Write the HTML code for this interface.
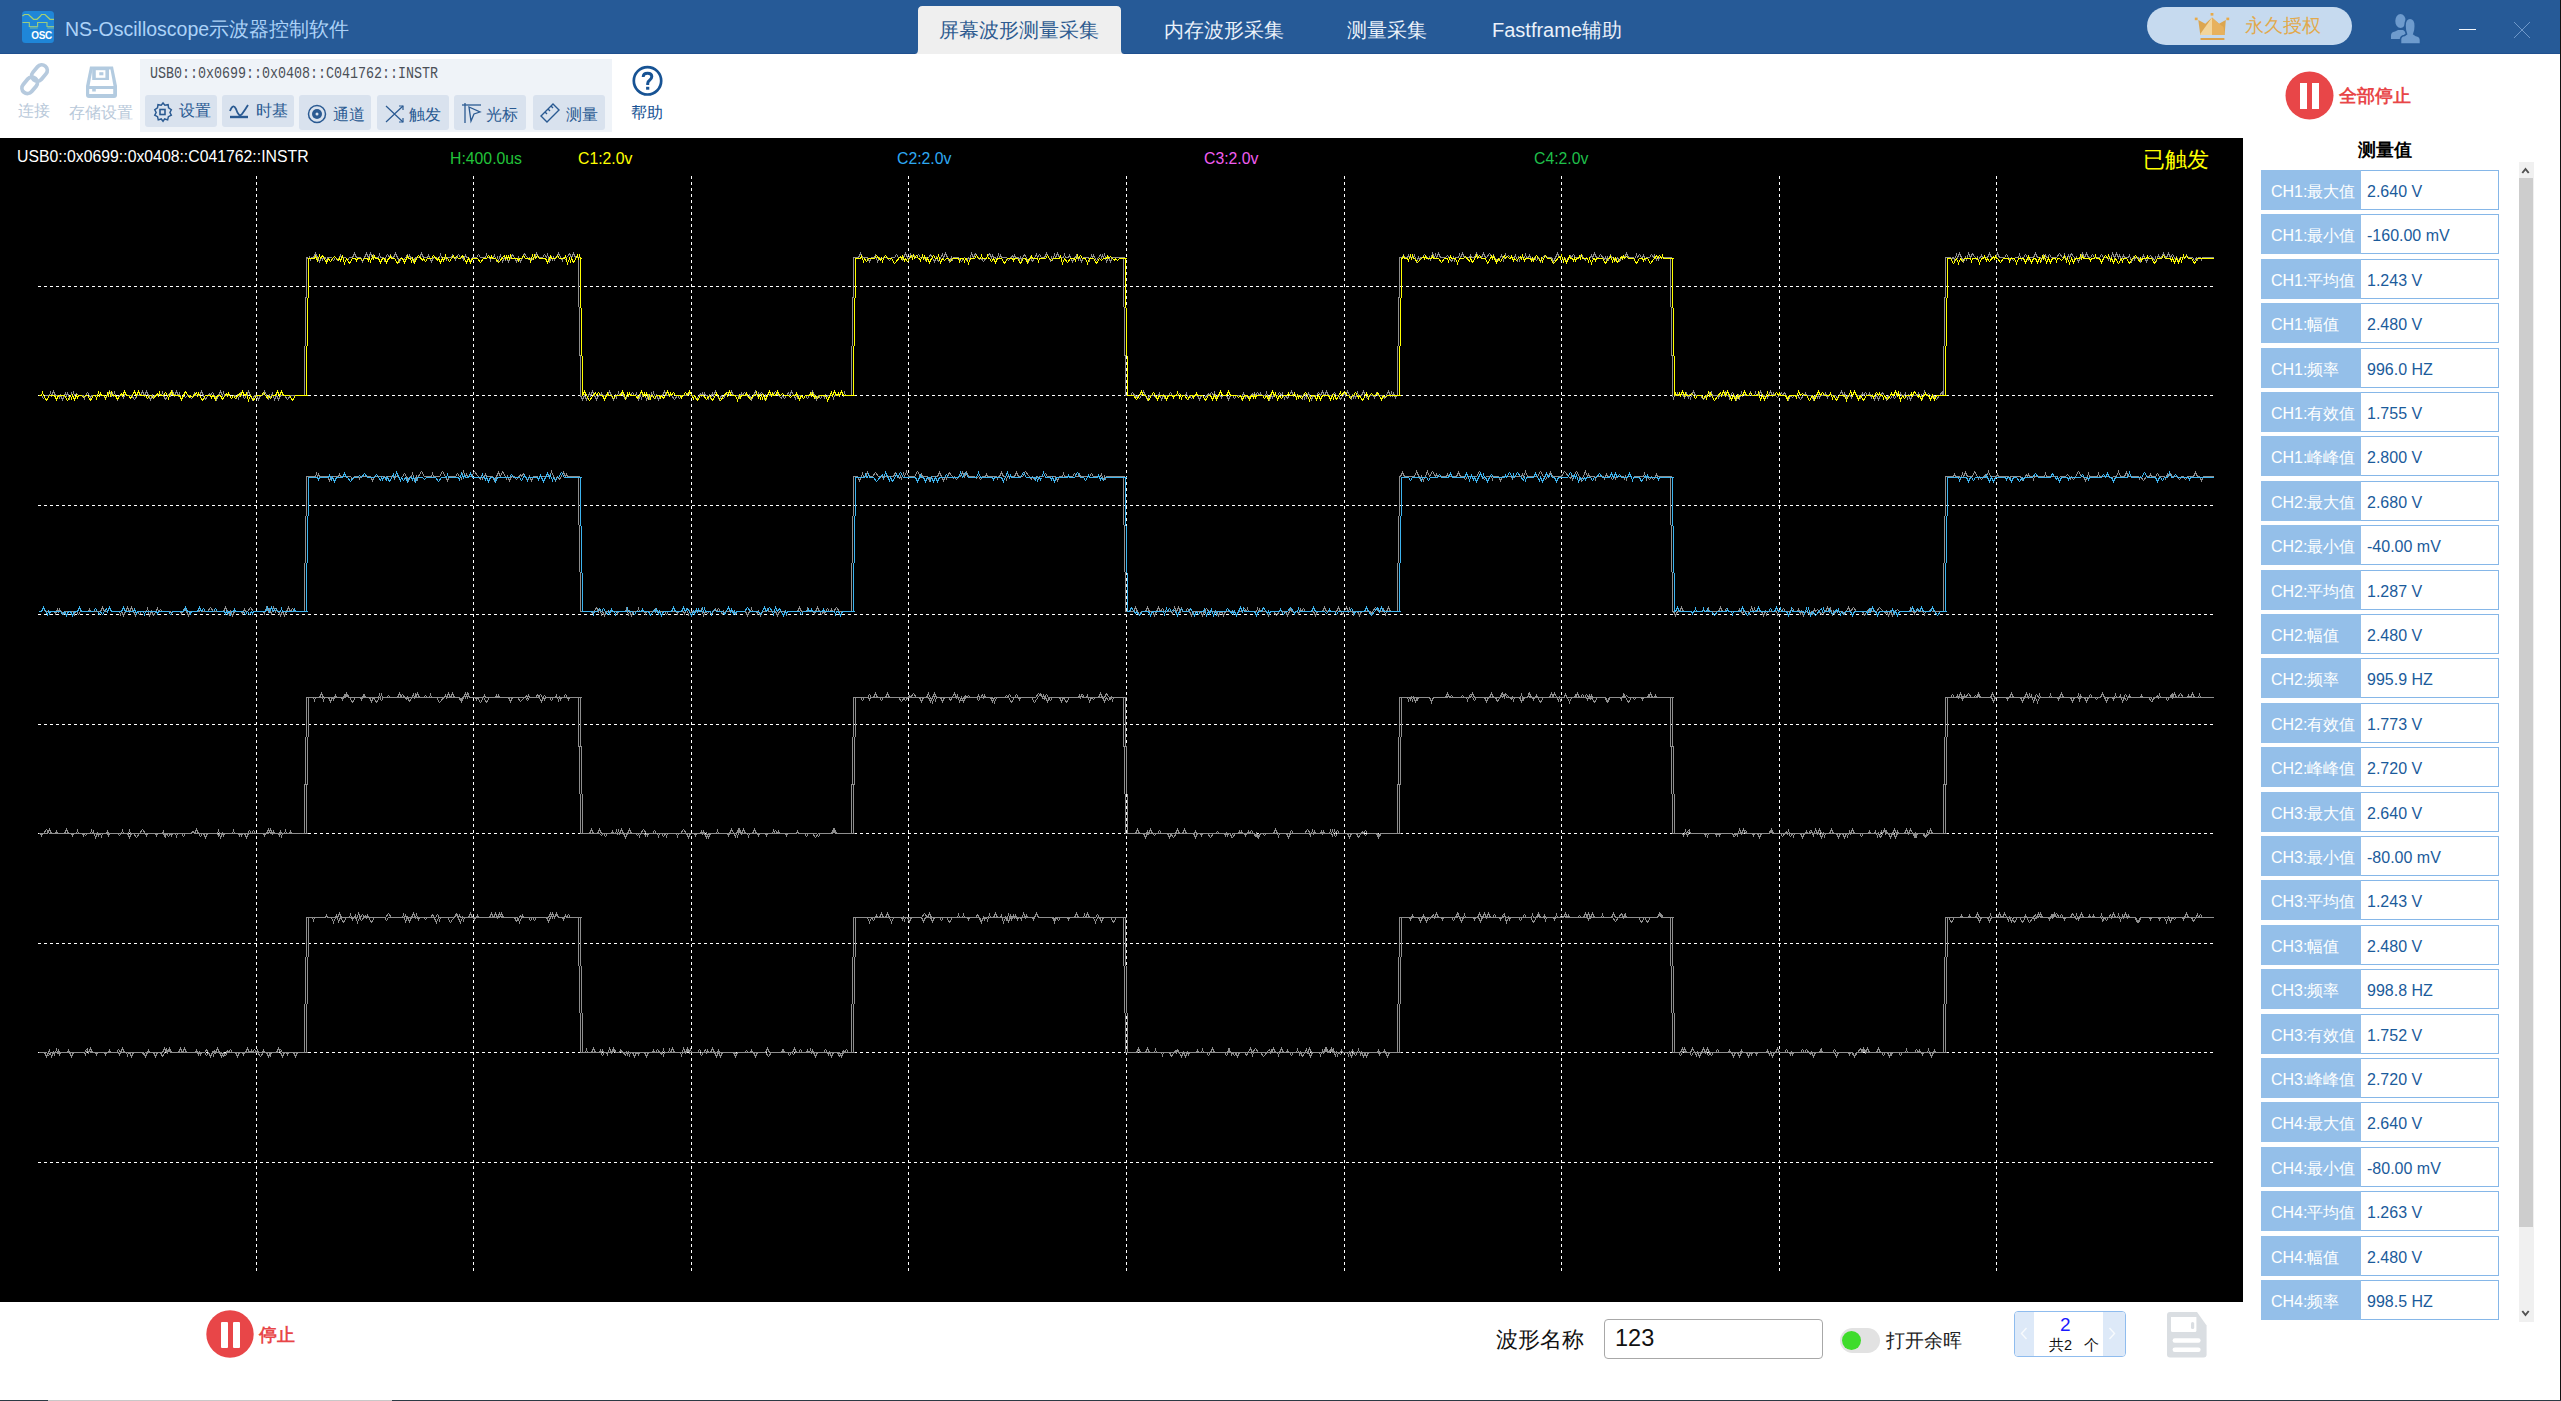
<!DOCTYPE html>
<html><head><meta charset="utf-8"><title>NS-Oscilloscope</title>
<style>
*{margin:0;padding:0;box-sizing:border-box}
html,body{width:2561px;height:1401px;overflow:hidden;background:#fff;font-family:"Liberation Sans",sans-serif}
.abs{position:absolute}
#title{position:absolute;left:0;top:0;width:2561px;height:54px;background:#265a97;border-bottom:1px solid #1f508f}
#apptitle{position:absolute;left:65px;top:15px;font-size:19.5px;color:#acd2f8;white-space:nowrap;line-height:28px}
.tab{position:absolute;top:17px;font-size:20px;line-height:26px;color:#eaf1fa;white-space:nowrap}
#lic{position:absolute;left:2147px;top:7px;width:205px;height:38px;background:#c6daef;border-radius:19px}
#lic span{position:absolute;left:98px;top:7px;font-size:19px;line-height:24px;color:#e2a94c;white-space:nowrap}
#toolbar{position:absolute;left:0;top:54px;width:2561px;height:84px;background:#fff}
#tpanel{position:absolute;left:140px;top:59px;width:472px;height:73px;background:#eff3f8}
#usbt{position:absolute;left:150px;top:64px;font-family:"Liberation Mono",monospace;font-size:17px;line-height:20px;color:#4a4f57;white-space:nowrap;transform:scaleX(0.784);transform-origin:0 0}
.btn{position:absolute;top:95px;height:32px;width:72px;background:#d9e2ee;border-radius:3px}
.btn span{position:absolute;left:34px;top:5px;font-size:16px;line-height:22px;color:#2a5a92;white-space:nowrap}
.btn svg{position:absolute;left:7px;top:6px}
.tool{position:absolute;font-size:17px;line-height:20px;white-space:nowrap}
#scope{position:absolute;left:0;top:138px;width:2243px;height:1164px;background:#000;overflow:hidden}
.sl{position:absolute;top:11px;font-size:15.8px;line-height:20px;white-space:nowrap}
#panel{position:absolute;left:2243px;top:138px;width:317px;height:1262px;background:#fff}
#ptitle{position:absolute;left:2358px;top:138px;font-size:17.5px;font-weight:bold;line-height:24px;color:#000;white-space:nowrap}
.mrow{position:absolute;left:2261px;width:238px}
.ml{position:absolute;left:0;top:0;width:100px;height:100%;background:#94bfe9;color:#fff;font-size:16px;line-height:43px;padding-left:10px;white-space:nowrap}
.mv{position:absolute;left:100px;top:0;width:138px;height:100%;border:1px solid #86b7e8;border-left:none;background:#fff;color:#1b5b9b;font-size:16px;line-height:42px;padding-left:6px;white-space:nowrap}
#sbar{position:absolute;left:2519px;top:162px;width:15px;height:1160px;background:#f0f0f0}
#sthumb{position:absolute;left:2519px;top:178px;width:14px;height:1049px;background:#cdcdcd}
#bottom{position:absolute;left:0;top:1302px;width:2243px;height:98px;background:#fff}
#rborder{position:absolute;left:2560px;top:0;width:1px;height:1401px;background:#121212}
#bborder{position:absolute;left:0;top:1400px;width:2561px;height:1px;background:#2b3a44}
#bborder2{position:absolute;left:48px;top:1400px;width:344px;height:1px;background:#c8c8c8}
</style></head><body>

<div id="title">
  <svg class="abs" style="left:21px;top:10px" width="34" height="34" viewBox="21 10 34 34">
    <rect x="22" y="11" width="32" height="32" rx="3.5" fill="#1f86d8"/>
    <path d="M22.5 16 L24.5 14.5 H28.5 L30 16 L33.5 19.3 H37 L40.5 16 L41.5 14.5 H45 L46.5 16 L50 19.3 H54" stroke="#a6cf72" stroke-width="1.2" fill="none"/>
    <path d="M22.5 22.5 H29.3 V26.5 H37.6 V22.5 H47 V26.5 H54" stroke="#9dcc7e" stroke-width="1.1" fill="none"/>
    <rect x="29.8" y="26.8" width="8" height="2" fill="#55a6b8"/>
    <rect x="47.3" y="26.8" width="6.7" height="2" fill="#55a6b8"/>
    <text x="52" y="39" font-family="Liberation Sans" font-weight="bold" font-size="10" fill="#fff" text-anchor="end" letter-spacing="-0.3">OSC</text>
  </svg>
  <div id="apptitle">NS-Oscilloscope示波器控制软件</div>
  <svg class="abs" style="left:910px;top:0" width="220" height="55" viewBox="910 0 220 55"><path d="M914.5 54 Q918 54 918 49.5 V10.5 Q918 6 922.5 6 H1116.5 Q1121 6 1121 10.5 V49.5 Q1121 54 1124.5 54 Z" fill="#efefef"/></svg>
  <div class="abs" style="left:939px;top:17px;font-size:20px;line-height:26px;color:#2e5b90;white-space:nowrap">屏幕波形测量采集</div>
  <div class="tab" style="left:1164px">内存波形采集</div>
  <div class="tab" style="left:1347px">测量采集</div>
  <div class="tab" style="left:1492px">Fastframe辅助</div>
  <div id="lic">
    <svg class="abs" style="left:46px;top:5px" width="38" height="30" viewBox="2193 12 38 30">
      <path d="M2198.3 20 L2205.3 23.8 L2212 17.5 L2219 23.8 L2225.8 20 L2224.6 35 H2200.3 Z" fill="#dca650"/>
      <path d="M2200.6 33.5 L2212 17.5 V35 H2200.3 Z" fill="#f2d59c"/>
      <path d="M2212 17.5 L2219 23.8 L2223.5 27 L2224.6 35 H2212 Z" fill="#e7b15e"/>
      <rect x="2194.8" y="17.6" width="2.8" height="2.6" fill="#e8aa48"/>
      <rect x="2210.6" y="13" width="2.8" height="2.6" fill="#e8aa48"/>
      <rect x="2226.4" y="17.6" width="2.8" height="2.6" fill="#e8aa48"/>
      <rect x="2200.3" y="38.1" width="24.3" height="1.9" rx="0.9" fill="#dca24c"/>
    </svg>
    <span>永久授权</span>
  </div>
  <svg class="abs" style="left:2386px;top:10px" width="40" height="36" viewBox="2386 10 40 36">
    <ellipse cx="2400.5" cy="21" rx="5.2" ry="7" fill="#6e9bcd"/>
    <path d="M2391 39 V35.5 Q2391 32 2395 31.5 L2398 30 H2403 L2406 32 V39 Z" fill="#6e9bcd"/>
    <g fill="#6e9bcd" stroke="#265a97" stroke-width="1.6">
      <path d="M2400.5 44 V39.5 Q2400.5 36 2404.5 35.5 L2406.5 34 Q2405 31 2405 26 Q2405 18.3 2410 18.3 Q2415.3 18.3 2415.3 26 Q2415.3 31 2413.8 34 L2416 35.5 Q2420.5 36.5 2420.5 40 V44 Z"/>
    </g>
  </svg>
  <div class="abs" style="left:2459px;top:29px;width:17px;height:1px;background:#f4f7fb"></div>
  <svg class="abs" style="left:2512px;top:20px" width="20" height="20" viewBox="0 0 20 20">
    <path d="M2 2 L18 18 M18 2 L2 18" stroke="#6f98c9" stroke-width="1"/>
  </svg>
</div>

<div id="toolbar"></div>
<!-- connect -->
<svg class="abs" style="left:14px;top:58px" width="40" height="40" viewBox="14 58 40 40">
  <g fill="none" stroke="#b6cade" stroke-width="3.8">
    <rect x="30.5" y="67.5" width="18" height="11" rx="5.5" transform="rotate(-50 39.5 73)"/>
    <rect x="20.7" y="79.8" width="18" height="11" rx="5.5" transform="rotate(-50 29.7 85.3)"/>
  </g>
</svg>
<div class="tool" style="left:18px;top:101px;color:#b9c9da;font-size:16px">连接</div>
<svg class="abs" style="left:80px;top:60px" width="44" height="44" viewBox="80 60 44 44">
  <g fill="#b3cbe0">
    <path d="M90 66.5 H113 L117 86 V95 Q117 98 114 98 H89 Q86 98 86 95 V86 Z"/>
  </g>
  <path d="M92.5 69.5 H110.5 L113.5 86 H89.5 Z" fill="#fff"/>
  <rect x="92.2" y="67" width="16.8" height="13" fill="#b3cbe0"/>
  <rect x="95.8" y="70.2" width="9.6" height="7.6" fill="#fff"/>
  <rect x="99.3" y="72.2" width="4.1" height="3.1" fill="#b3cbe0"/>
  <rect x="89.2" y="89" width="24" height="5" fill="#fff"/>
  <rect x="92.2" y="88.5" width="3.6" height="3" fill="#b3cbe0"/>
</svg>
<div class="tool" style="left:69px;top:103px;color:#b9c9da;font-size:16px">存储设置</div>

<div id="tpanel"></div>
<div id="usbt">USB0::0x0699::0x0408::C041762::INSTR</div>
<div class="btn" style="left:145px"><svg width="22" height="22" viewBox="0 0 22 22"><g fill="none" stroke="#2a5a92" stroke-width="1.6"><path d="M11 2 L13 4.5 L16.5 4 L17 7.5 L20 9.5 L18.5 12.5 L20 15.5 L16.8 17 L16 20.5 L12.8 19.5 L11 22 L9 19.5 L5.8 20.5 L5 17 L2 15.5 L3.5 12.5 L2 9.5 L5 7.5 L5.5 4 L9 4.5 Z" transform="scale(0.92) translate(1 0)"/><rect x="8" y="8.5" width="5" height="5"/></g></svg><span>设置</span></div>
<div class="btn" style="left:222px"><svg width="22" height="22" viewBox="0 0 22 22"><g fill="none" stroke="#2a5a92" stroke-width="1.8"><path d="M1 10 Q4 2 7 8 Q10 17 13 13 Q16 9 19 4"/><path d="M1 16 H19" stroke-width="2.4"/></g></svg><span>时基</span></div>
<div class="btn" style="left:299px;height:35px"><svg width="22" height="22" viewBox="0 0 22 22" style="top:8px"><circle cx="11" cy="11" r="8.5" fill="none" stroke="#2a5a92" stroke-width="1.5"/><circle cx="11" cy="11" r="5" fill="#2a5a92"/><circle cx="11" cy="11" r="1.5" fill="#d9e2ee"/></svg><span style="top:9px">通道</span></div>
<div class="btn" style="left:377px;height:35px"><svg width="22" height="22" viewBox="0 0 22 22" style="top:8px"><g fill="none" stroke="#2a5a92" stroke-width="1.2"><path d="M2 3 L19 19 M19 3 L2 19"/><path d="M15 3 H19 V7 M15 19 H19 V15"/></g></svg><span style="top:9px;left:31.5px">触发</span></div>
<div class="btn" style="left:454px;height:35px"><svg width="22" height="24" viewBox="0 0 22 24" style="top:6px"><g fill="none" stroke="#2a5a92" stroke-width="1.3"><path d="M4 2 V22"/><path d="M1 4 H20"/><path d="M8 6 L19 11 L13 13 L10 20 Z"/></g></svg><span style="top:9px;left:32px">光标</span></div>
<div class="btn" style="left:533px;height:35px"><svg width="24" height="24" viewBox="0 0 24 24" style="top:6px;left:5px"><g fill="none" stroke="#2a5a92" stroke-width="1.4"><path d="M3 15 L15 3 L21 9 L9 21 Z"/><path d="M7 11 L9 13 M10 8 L12 10 M13 5 L15 7"/></g></svg><span style="top:9px;left:32.5px">测量</span></div>

<svg class="abs" style="left:628px;top:61px" width="40" height="40" viewBox="628 61 40 40">
  <circle cx="647.5" cy="80.8" r="13.7" fill="none" stroke="#175394" stroke-width="2.7"/>
  <path d="M643.2 77 Q643.2 73.3 647.6 73.3 Q651.8 73.3 651.8 76.6 Q651.8 78.8 649.6 80.2 Q647.7 81.4 647.7 83.6 V85" fill="none" stroke="#175394" stroke-width="3"/>
  <rect x="646.1" y="86.8" width="3.2" height="2.9" fill="#175394"/>
</svg>
<div class="tool" style="left:631px;top:103px;color:#175394;font-size:16px">帮助</div>

<svg class="abs" style="left:2285px;top:71px" width="49" height="49" viewBox="0 0 49 49">
  <circle cx="24.5" cy="24.5" r="24" fill="#e84648"/>
  <rect x="15" y="12" width="7" height="26" fill="#fff"/>
  <rect x="27" y="12" width="7" height="26" fill="#fff"/>
</svg>
<div class="tool" style="left:2339px;top:85px;color:#e84648;font-weight:bold;font-size:17.5px;line-height:22px">全部停止</div>

<div id="scope">
  <svg class="abs" style="left:0;top:-138px" width="2243" height="1302" viewBox="0 0 2243 1302">
    <g stroke="#ffffff" stroke-width="1" stroke-dasharray="3 3" fill="none">
<line x1="38" y1="286.5" x2="2214" y2="286.5"/>
<line x1="38" y1="395.5" x2="2214" y2="395.5"/>
<line x1="38" y1="505.5" x2="2214" y2="505.5"/>
<line x1="38" y1="614.5" x2="2214" y2="614.5"/>
<line x1="38" y1="724.5" x2="2214" y2="724.5"/>
<line x1="38" y1="833.5" x2="2214" y2="833.5"/>
<line x1="38" y1="943.5" x2="2214" y2="943.5"/>
<line x1="38" y1="1052.5" x2="2214" y2="1052.5"/>
<line x1="38" y1="1162.5" x2="2214" y2="1162.5"/>
<line x1="256.5" y1="176" x2="256.5" y2="1271"/>
<line x1="473.5" y1="176" x2="473.5" y2="1271"/>
<line x1="691.5" y1="176" x2="691.5" y2="1271"/>
<line x1="908.5" y1="176" x2="908.5" y2="1271"/>
<line x1="1126.5" y1="176" x2="1126.5" y2="1271"/>
<line x1="1344.5" y1="176" x2="1344.5" y2="1271"/>
<line x1="1561.5" y1="176" x2="1561.5" y2="1271"/>
<line x1="1779.5" y1="176" x2="1779.5" y2="1271"/>
<line x1="1996.5" y1="176" x2="1996.5" y2="1271"/>
    </g>
    <g fill="none" stroke-width="1" stroke-linejoin="miter" shape-rendering="crispEdges">
<path d="M38.5 395.5 41.5 395.5 43.5 398.5 45.5 395.5 49.5 395.5 50.5 392.5 51.5 395.5 53.5 391.5 55.5 395.5 58.5 395.5 59.5 397.5 60.5 395.5 60.5 395.5 62.5 399.5 64.5 395.5 65.5 393.5 66.5 395.5 67.5 393.5 68.5 395.5 69.5 398.5 71.5 393.5 72.5 395.5 73.5 392.5 74.5 395.5 74.5 395.5 76.5 393.5 78.5 395.5 83.5 395.5 84.5 398.5 85.5 395.5 87.5 392.5 89.5 395.5 90.5 397.5 91.5 395.5 96.5 395.5 98.5 393.5 100.5 395.5 103.5 395.5 105.5 398.5 107.5 395.5 109.5 391.5 111.5 395.5 112.5 393.5 113.5 395.5 114.5 392.5 115.5 395.5 117.5 399.5 119.5 395.5 122.5 395.5 123.5 397.5 124.5 395.5 125.5 393.5 126.5 395.5 131.5 395.5 134.5 399.5 137.5 395.5 140.5 395.5 142.5 391.5 144.5 395.5 146.5 391.5 150.5 399.5 152.5 395.5 153.5 397.5 154.5 395.5 158.5 395.5 159.5 393.5 160.5 395.5 161.5 395.5 162.5 392.5 163.5 395.5 165.5 399.5 169.5 393.5 170.5 395.5 172.5 391.5 174.5 395.5 176.5 391.5 178.5 395.5 178.5 395.5 179.5 393.5 181.5 399.5 183.5 395.5 185.5 397.5 187.5 395.5 189.5 395.5 191.5 398.5 193.5 395.5 194.5 393.5 195.5 395.5 199.5 395.5 201.5 391.5 203.5 395.5 205.5 399.5 209.5 393.5 210.5 395.5 212.5 392.5 214.5 395.5 216.5 399.5 220.5 391.5 222.5 395.5 223.5 392.5 224.5 395.5 229.5 395.5 231.5 398.5 233.5 395.5 235.5 395.5 236.5 397.5 237.5 395.5 238.5 398.5 239.5 395.5 240.5 393.5 241.5 395.5 242.5 395.5 244.5 398.5 246.5 395.5 248.5 391.5 250.5 395.5 252.5 399.5 254.5 395.5 256.5 395.5 258.5 399.5 260.5 395.5 262.5 395.5 264.5 391.5 268.5 398.5 269.5 395.5 270.5 397.5 271.5 395.5 272.5 393.5 274.5 399.5 276.5 395.5 278.5 399.5 280.5 395.5 284.5 395.5 287.5 399.5 290.5 395.5 290.5 395.5 305.5 395.5 304.5 395.5 304.5 347.2 305.5 344.4 305.5 298.9 306.5 296.1 306.5 257.5 306.5 257.5 307.5 257.5 308.5 259.5 309.5 257.5 310.5 259.5 311.5 257.5 313.5 257.5 315.5 253.5 319.5 261.5 321.5 257.5 322.5 259.5 323.5 257.5 325.5 257.5 326.5 260.5 327.5 257.5 331.5 257.5 333.5 260.5 335.5 257.5 337.5 260.5 339.5 257.5 340.5 255.5 341.5 257.5 345.5 257.5 347.5 260.5 349.5 257.5 352.5 257.5 354.5 253.5 356.5 257.5 360.5 257.5 362.5 261.5 366.5 253.5 368.5 257.5 370.5 253.5 372.5 257.5 372.5 257.5 373.5 255.5 374.5 257.5 378.5 257.5 379.5 254.5 380.5 257.5 383.5 257.5 384.5 260.5 385.5 257.5 387.5 254.5 389.5 257.5 389.5 257.5 390.5 255.5 391.5 257.5 393.5 257.5 395.5 253.5 399.5 261.5 401.5 257.5 403.5 260.5 407.5 254.5 408.5 257.5 409.5 255.5 410.5 257.5 411.5 257.5 413.5 261.5 415.5 257.5 419.5 257.5 421.5 253.5 423.5 257.5 427.5 257.5 428.5 255.5 429.5 257.5 431.5 261.5 433.5 257.5 436.5 257.5 437.5 259.5 438.5 257.5 439.5 257.5 440.5 254.5 441.5 257.5 445.5 257.5 446.5 259.5 447.5 257.5 451.5 257.5 452.5 255.5 453.5 257.5 454.5 257.5 455.5 259.5 456.5 257.5 456.5 257.5 458.5 254.5 460.5 257.5 462.5 257.5 463.5 259.5 464.5 257.5 465.5 255.5 466.5 257.5 468.5 257.5 470.5 261.5 472.5 257.5 476.5 257.5 478.5 254.5 480.5 257.5 485.5 257.5 486.5 254.5 487.5 257.5 489.5 257.5 490.5 260.5 491.5 257.5 493.5 257.5 494.5 255.5 496.5 260.5 497.5 257.5 498.5 260.5 499.5 257.5 500.5 255.5 502.5 261.5 504.5 257.5 505.5 259.5 506.5 257.5 506.5 257.5 508.5 261.5 510.5 257.5 512.5 254.5 516.5 261.5 518.5 257.5 520.5 261.5 522.5 257.5 524.5 253.5 528.5 259.5 529.5 257.5 531.5 260.5 533.5 257.5 534.5 257.5 536.5 253.5 538.5 257.5 542.5 257.5 544.5 254.5 546.5 257.5 547.5 254.5 549.5 261.5 551.5 257.5 552.5 259.5 553.5 257.5 553.5 257.5 554.5 259.5 555.5 257.5 556.5 257.5 558.5 253.5 562.5 260.5 563.5 257.5 565.5 259.5 569.5 253.5 571.5 257.5 573.5 253.5 575.5 257.5 575.5 257.5 579.5 257.5 578.5 257.5 578.5 305.8 579.5 308.6 579.5 354.1 580.5 356.9 580.5 395.5 580.5 395.5 580.5 395.5 582.5 399.5 584.5 395.5 586.5 399.5 588.5 395.5 589.5 393.5 590.5 395.5 592.5 391.5 594.5 395.5 596.5 399.5 598.5 395.5 600.5 395.5 601.5 393.5 602.5 395.5 607.5 395.5 609.5 391.5 613.5 399.5 615.5 395.5 616.5 397.5 618.5 392.5 619.5 395.5 621.5 392.5 623.5 395.5 625.5 399.5 629.5 393.5 630.5 395.5 632.5 392.5 634.5 395.5 635.5 395.5 636.5 393.5 638.5 399.5 640.5 395.5 641.5 398.5 642.5 395.5 643.5 395.5 644.5 393.5 646.5 399.5 648.5 395.5 649.5 398.5 651.5 393.5 652.5 395.5 653.5 392.5 655.5 397.5 656.5 395.5 658.5 399.5 660.5 395.5 662.5 395.5 664.5 391.5 666.5 395.5 671.5 395.5 674.5 399.5 677.5 395.5 679.5 398.5 681.5 395.5 686.5 395.5 688.5 392.5 690.5 395.5 694.5 395.5 696.5 399.5 700.5 393.5 701.5 395.5 702.5 393.5 703.5 395.5 704.5 393.5 705.5 395.5 707.5 395.5 708.5 398.5 709.5 395.5 709.5 395.5 710.5 397.5 712.5 393.5 713.5 395.5 715.5 391.5 719.5 399.5 721.5 395.5 723.5 398.5 725.5 395.5 727.5 392.5 729.5 395.5 731.5 391.5 733.5 395.5 738.5 395.5 739.5 397.5 741.5 393.5 742.5 395.5 744.5 392.5 748.5 397.5 749.5 395.5 751.5 399.5 755.5 391.5 757.5 395.5 758.5 393.5 759.5 395.5 761.5 392.5 763.5 395.5 763.5 395.5 764.5 398.5 765.5 395.5 766.5 398.5 767.5 395.5 768.5 393.5 769.5 395.5 772.5 395.5 775.5 391.5 781.5 398.5 782.5 395.5 784.5 398.5 788.5 392.5 789.5 395.5 791.5 391.5 795.5 398.5 796.5 395.5 797.5 397.5 798.5 395.5 801.5 395.5 803.5 398.5 805.5 395.5 805.5 395.5 807.5 398.5 809.5 395.5 810.5 395.5 812.5 391.5 816.5 399.5 818.5 395.5 820.5 398.5 822.5 395.5 823.5 395.5 824.5 397.5 825.5 395.5 826.5 397.5 827.5 395.5 832.5 395.5 833.5 398.5 834.5 395.5 839.5 395.5 841.5 391.5 843.5 395.5 844.5 392.5 845.5 395.5 845.5 395.5 852.5 395.5 851.5 395.5 851.5 347.2 852.5 344.4 852.5 298.9 853.5 296.1 853.5 257.5 853.5 257.5 858.5 257.5 860.5 253.5 862.5 257.5 867.5 257.5 869.5 261.5 871.5 257.5 874.5 257.5 875.5 255.5 877.5 261.5 879.5 257.5 881.5 259.5 883.5 257.5 887.5 257.5 889.5 260.5 891.5 257.5 894.5 257.5 896.5 254.5 898.5 257.5 901.5 257.5 902.5 259.5 903.5 257.5 905.5 253.5 907.5 257.5 908.5 259.5 910.5 254.5 911.5 257.5 913.5 254.5 915.5 257.5 916.5 257.5 918.5 254.5 920.5 257.5 924.5 257.5 925.5 259.5 926.5 257.5 928.5 257.5 930.5 254.5 934.5 261.5 936.5 257.5 938.5 261.5 942.5 254.5 943.5 257.5 945.5 253.5 949.5 261.5 951.5 257.5 952.5 259.5 953.5 257.5 958.5 257.5 961.5 261.5 964.5 257.5 964.5 257.5 966.5 260.5 968.5 257.5 969.5 259.5 971.5 253.5 973.5 257.5 975.5 253.5 979.5 259.5 980.5 257.5 983.5 261.5 989.5 253.5 991.5 257.5 992.5 255.5 993.5 257.5 995.5 257.5 996.5 259.5 998.5 254.5 999.5 257.5 1000.5 255.5 1001.5 257.5 1006.5 257.5 1008.5 260.5 1012.5 255.5 1013.5 257.5 1014.5 255.5 1015.5 257.5 1018.5 257.5 1019.5 259.5 1020.5 257.5 1021.5 259.5 1022.5 257.5 1024.5 254.5 1028.5 261.5 1030.5 257.5 1032.5 261.5 1036.5 254.5 1037.5 257.5 1039.5 254.5 1041.5 257.5 1044.5 257.5 1046.5 253.5 1050.5 260.5 1051.5 257.5 1052.5 259.5 1054.5 254.5 1055.5 257.5 1057.5 253.5 1059.5 257.5 1063.5 257.5 1064.5 254.5 1065.5 257.5 1068.5 257.5 1069.5 255.5 1070.5 257.5 1070.5 257.5 1072.5 261.5 1074.5 257.5 1075.5 257.5 1076.5 255.5 1078.5 259.5 1079.5 257.5 1081.5 261.5 1083.5 257.5 1088.5 257.5 1089.5 260.5 1091.5 255.5 1092.5 257.5 1093.5 255.5 1094.5 257.5 1096.5 260.5 1100.5 254.5 1101.5 257.5 1102.5 255.5 1103.5 257.5 1103.5 257.5 1104.5 254.5 1106.5 261.5 1108.5 257.5 1110.5 261.5 1112.5 257.5 1112.5 257.5 1124.5 257.5 1123.5 257.5 1123.5 305.8 1124.5 308.6 1124.5 354.1 1125.5 356.9 1125.5 395.5 1125.5 395.5 1130.5 395.5 1132.5 392.5 1136.5 397.5 1137.5 395.5 1139.5 398.5 1141.5 395.5 1141.5 395.5 1143.5 391.5 1145.5 395.5 1147.5 399.5 1149.5 395.5 1153.5 395.5 1155.5 397.5 1157.5 395.5 1158.5 395.5 1159.5 393.5 1161.5 399.5 1163.5 395.5 1164.5 397.5 1165.5 395.5 1168.5 395.5 1170.5 392.5 1172.5 395.5 1177.5 395.5 1179.5 393.5 1181.5 395.5 1185.5 395.5 1186.5 393.5 1188.5 398.5 1189.5 395.5 1191.5 398.5 1193.5 395.5 1197.5 395.5 1199.5 399.5 1201.5 395.5 1202.5 395.5 1204.5 398.5 1208.5 393.5 1209.5 395.5 1211.5 392.5 1213.5 395.5 1214.5 392.5 1215.5 395.5 1215.5 395.5 1216.5 397.5 1217.5 395.5 1220.5 395.5 1221.5 397.5 1222.5 395.5 1226.5 395.5 1228.5 399.5 1230.5 395.5 1232.5 395.5 1234.5 398.5 1236.5 395.5 1240.5 395.5 1241.5 398.5 1242.5 395.5 1243.5 393.5 1245.5 397.5 1246.5 395.5 1248.5 398.5 1252.5 393.5 1253.5 395.5 1254.5 393.5 1255.5 395.5 1255.5 395.5 1257.5 392.5 1259.5 395.5 1260.5 393.5 1261.5 395.5 1265.5 395.5 1266.5 392.5 1267.5 395.5 1269.5 399.5 1271.5 395.5 1272.5 397.5 1273.5 395.5 1277.5 395.5 1279.5 392.5 1281.5 395.5 1281.5 395.5 1282.5 393.5 1284.5 398.5 1285.5 395.5 1287.5 398.5 1291.5 391.5 1293.5 395.5 1294.5 393.5 1295.5 395.5 1296.5 397.5 1297.5 395.5 1301.5 395.5 1302.5 398.5 1303.5 395.5 1304.5 398.5 1305.5 395.5 1306.5 397.5 1307.5 395.5 1308.5 393.5 1309.5 395.5 1311.5 399.5 1313.5 395.5 1316.5 395.5 1318.5 392.5 1320.5 395.5 1322.5 391.5 1324.5 395.5 1326.5 391.5 1328.5 395.5 1332.5 395.5 1334.5 392.5 1336.5 395.5 1338.5 395.5 1340.5 399.5 1344.5 393.5 1345.5 395.5 1347.5 391.5 1351.5 398.5 1352.5 395.5 1353.5 397.5 1354.5 395.5 1355.5 397.5 1356.5 395.5 1357.5 392.5 1358.5 395.5 1361.5 395.5 1363.5 391.5 1365.5 395.5 1367.5 398.5 1369.5 395.5 1373.5 395.5 1374.5 397.5 1375.5 395.5 1376.5 393.5 1377.5 395.5 1382.5 395.5 1384.5 398.5 1388.5 391.5 1390.5 395.5 1391.5 392.5 1392.5 395.5 1393.5 393.5 1395.5 397.5 1396.5 395.5 1396.5 395.5 1398.5 395.5 1397.5 395.5 1397.5 347.2 1398.5 344.4 1398.5 298.9 1399.5 296.1 1399.5 257.5 1399.5 257.5 1402.5 257.5 1403.5 255.5 1404.5 257.5 1407.5 257.5 1408.5 255.5 1409.5 257.5 1413.5 257.5 1414.5 255.5 1416.5 261.5 1418.5 257.5 1419.5 259.5 1420.5 257.5 1422.5 257.5 1424.5 254.5 1428.5 259.5 1429.5 257.5 1430.5 259.5 1432.5 253.5 1434.5 257.5 1435.5 254.5 1436.5 257.5 1438.5 253.5 1440.5 257.5 1445.5 257.5 1447.5 255.5 1451.5 261.5 1453.5 257.5 1454.5 260.5 1455.5 257.5 1458.5 257.5 1459.5 254.5 1460.5 257.5 1462.5 253.5 1464.5 257.5 1469.5 257.5 1470.5 255.5 1471.5 257.5 1474.5 257.5 1476.5 253.5 1478.5 257.5 1481.5 257.5 1483.5 253.5 1485.5 257.5 1486.5 257.5 1489.5 253.5 1492.5 257.5 1493.5 255.5 1494.5 257.5 1497.5 261.5 1500.5 257.5 1501.5 255.5 1502.5 257.5 1502.5 257.5 1503.5 260.5 1505.5 254.5 1506.5 257.5 1508.5 255.5 1510.5 257.5 1514.5 257.5 1515.5 255.5 1517.5 260.5 1518.5 257.5 1519.5 260.5 1520.5 257.5 1524.5 257.5 1525.5 254.5 1526.5 257.5 1528.5 257.5 1529.5 255.5 1530.5 257.5 1530.5 257.5 1532.5 260.5 1534.5 257.5 1536.5 260.5 1538.5 257.5 1540.5 261.5 1542.5 257.5 1544.5 255.5 1546.5 257.5 1551.5 257.5 1553.5 261.5 1555.5 257.5 1557.5 253.5 1559.5 257.5 1560.5 257.5 1561.5 255.5 1563.5 260.5 1564.5 257.5 1566.5 260.5 1570.5 255.5 1571.5 257.5 1573.5 254.5 1575.5 257.5 1579.5 257.5 1581.5 254.5 1585.5 260.5 1586.5 257.5 1588.5 260.5 1590.5 257.5 1590.5 257.5 1591.5 255.5 1592.5 257.5 1592.5 257.5 1594.5 253.5 1596.5 257.5 1598.5 257.5 1600.5 254.5 1604.5 259.5 1605.5 257.5 1606.5 259.5 1607.5 257.5 1608.5 259.5 1609.5 257.5 1610.5 255.5 1611.5 257.5 1613.5 257.5 1615.5 260.5 1617.5 257.5 1619.5 261.5 1623.5 255.5 1624.5 257.5 1626.5 253.5 1628.5 257.5 1633.5 257.5 1634.5 259.5 1636.5 254.5 1637.5 257.5 1639.5 254.5 1641.5 257.5 1642.5 257.5 1643.5 255.5 1644.5 257.5 1645.5 259.5 1646.5 257.5 1649.5 257.5 1651.5 254.5 1653.5 257.5 1654.5 255.5 1656.5 259.5 1657.5 257.5 1658.5 259.5 1659.5 257.5 1659.5 257.5 1671.5 257.5 1670.5 257.5 1670.5 305.8 1671.5 308.6 1671.5 354.1 1672.5 356.9 1672.5 395.5 1672.5 395.5 1672.5 395.5 1673.5 398.5 1674.5 395.5 1676.5 395.5 1677.5 393.5 1678.5 395.5 1680.5 395.5 1681.5 393.5 1682.5 395.5 1683.5 395.5 1684.5 397.5 1685.5 395.5 1686.5 393.5 1688.5 397.5 1689.5 395.5 1690.5 398.5 1691.5 395.5 1693.5 391.5 1695.5 395.5 1700.5 395.5 1703.5 399.5 1709.5 392.5 1710.5 395.5 1711.5 392.5 1712.5 395.5 1717.5 395.5 1718.5 397.5 1719.5 395.5 1724.5 395.5 1725.5 392.5 1726.5 395.5 1728.5 395.5 1729.5 398.5 1730.5 395.5 1732.5 392.5 1734.5 395.5 1736.5 399.5 1738.5 395.5 1739.5 398.5 1741.5 392.5 1742.5 395.5 1743.5 393.5 1744.5 395.5 1749.5 395.5 1750.5 392.5 1751.5 395.5 1754.5 395.5 1755.5 392.5 1756.5 395.5 1758.5 395.5 1760.5 391.5 1762.5 395.5 1764.5 395.5 1765.5 397.5 1766.5 395.5 1767.5 397.5 1768.5 395.5 1770.5 391.5 1772.5 395.5 1773.5 393.5 1774.5 395.5 1775.5 395.5 1777.5 397.5 1781.5 392.5 1782.5 395.5 1784.5 392.5 1788.5 399.5 1790.5 395.5 1792.5 397.5 1794.5 395.5 1797.5 395.5 1800.5 399.5 1803.5 395.5 1804.5 395.5 1805.5 393.5 1806.5 395.5 1811.5 395.5 1813.5 399.5 1815.5 395.5 1816.5 395.5 1817.5 397.5 1818.5 395.5 1819.5 397.5 1820.5 395.5 1824.5 395.5 1825.5 393.5 1826.5 395.5 1827.5 397.5 1828.5 395.5 1829.5 395.5 1830.5 393.5 1831.5 395.5 1835.5 395.5 1837.5 398.5 1841.5 391.5 1843.5 395.5 1844.5 393.5 1845.5 395.5 1845.5 395.5 1846.5 397.5 1847.5 395.5 1850.5 395.5 1851.5 397.5 1852.5 395.5 1854.5 391.5 1856.5 395.5 1859.5 395.5 1860.5 397.5 1862.5 393.5 1863.5 395.5 1865.5 392.5 1867.5 395.5 1868.5 395.5 1869.5 393.5 1871.5 397.5 1872.5 395.5 1874.5 399.5 1876.5 395.5 1878.5 399.5 1880.5 395.5 1882.5 392.5 1886.5 399.5 1888.5 395.5 1890.5 398.5 1892.5 395.5 1892.5 395.5 1894.5 398.5 1898.5 392.5 1899.5 395.5 1900.5 393.5 1901.5 395.5 1904.5 395.5 1905.5 393.5 1907.5 398.5 1908.5 395.5 1910.5 399.5 1912.5 395.5 1917.5 395.5 1918.5 393.5 1920.5 397.5 1921.5 395.5 1922.5 398.5 1924.5 391.5 1926.5 395.5 1928.5 393.5 1932.5 397.5 1933.5 395.5 1936.5 399.5 1942.5 391.5 1942.5 395.5 1944.5 395.5 1943.5 395.5 1943.5 347.2 1944.5 344.4 1944.5 298.9 1945.5 296.1 1945.5 257.5 1945.5 257.5 1950.5 257.5 1951.5 259.5 1952.5 257.5 1953.5 257.5 1954.5 259.5 1956.5 254.5 1957.5 257.5 1959.5 253.5 1963.5 261.5 1965.5 257.5 1966.5 259.5 1968.5 253.5 1970.5 257.5 1972.5 253.5 1976.5 259.5 1977.5 257.5 1978.5 260.5 1979.5 257.5 1980.5 257.5 1981.5 255.5 1982.5 257.5 1987.5 257.5 1989.5 253.5 1991.5 257.5 1995.5 257.5 1997.5 253.5 1999.5 257.5 2004.5 257.5 2006.5 254.5 2010.5 260.5 2011.5 257.5 2013.5 260.5 2015.5 257.5 2018.5 257.5 2019.5 254.5 2020.5 257.5 2021.5 259.5 2022.5 257.5 2023.5 257.5 2025.5 254.5 2027.5 257.5 2028.5 259.5 2029.5 257.5 2033.5 257.5 2035.5 253.5 2037.5 257.5 2040.5 257.5 2041.5 260.5 2043.5 255.5 2044.5 257.5 2045.5 255.5 2046.5 257.5 2047.5 257.5 2049.5 254.5 2051.5 257.5 2056.5 257.5 2059.5 253.5 2062.5 257.5 2063.5 257.5 2064.5 254.5 2065.5 257.5 2065.5 257.5 2066.5 259.5 2068.5 255.5 2069.5 257.5 2071.5 253.5 2075.5 259.5 2076.5 257.5 2078.5 261.5 2082.5 253.5 2084.5 257.5 2086.5 253.5 2088.5 257.5 2090.5 257.5 2092.5 254.5 2094.5 257.5 2099.5 257.5 2101.5 254.5 2103.5 257.5 2107.5 257.5 2108.5 259.5 2109.5 257.5 2109.5 257.5 2110.5 259.5 2112.5 253.5 2114.5 257.5 2116.5 253.5 2118.5 257.5 2119.5 255.5 2120.5 257.5 2121.5 259.5 2122.5 257.5 2123.5 255.5 2124.5 257.5 2128.5 257.5 2129.5 255.5 2131.5 261.5 2133.5 257.5 2134.5 259.5 2135.5 257.5 2138.5 257.5 2140.5 261.5 2142.5 257.5 2142.5 257.5 2143.5 255.5 2144.5 257.5 2144.5 257.5 2146.5 261.5 2148.5 257.5 2150.5 255.5 2154.5 260.5 2155.5 257.5 2156.5 260.5 2157.5 257.5 2158.5 255.5 2159.5 257.5 2161.5 257.5 2163.5 253.5 2165.5 257.5 2166.5 257.5 2168.5 253.5 2170.5 257.5 2172.5 254.5 2174.5 257.5 2175.5 259.5 2176.5 257.5 2178.5 261.5 2180.5 257.5 2185.5 257.5 2186.5 255.5 2187.5 257.5 2192.5 257.5 2194.5 260.5 2196.5 257.5 2197.5 259.5 2198.5 257.5 2200.5 257.5 2201.5 259.5 2202.5 257.5 2202.5 257.5 2213.5 257.5" stroke="#8e8e8e"/>
<path d="M38.5 395.5 41.5 395.5 42.5 392.5 43.5 395.5 46.5 400.5 49.5 395.5 54.5 395.5 56.5 399.5 58.5 395.5 64.5 395.5 67.5 400.5 70.5 395.5 71.5 398.5 72.5 395.5 72.5 395.5 74.5 399.5 76.5 395.5 76.5 395.5 77.5 397.5 78.5 395.5 81.5 395.5 83.5 397.5 85.5 395.5 87.5 395.5 90.5 400.5 93.5 395.5 95.5 395.5 96.5 398.5 98.5 392.5 99.5 395.5 100.5 393.5 101.5 395.5 104.5 395.5 105.5 398.5 107.5 393.5 108.5 395.5 109.5 392.5 110.5 395.5 110.5 395.5 111.5 392.5 112.5 395.5 115.5 395.5 117.5 399.5 121.5 393.5 122.5 395.5 124.5 391.5 126.5 395.5 128.5 395.5 130.5 398.5 134.5 391.5 136.5 395.5 138.5 391.5 140.5 395.5 145.5 395.5 147.5 398.5 149.5 395.5 151.5 395.5 153.5 398.5 157.5 393.5 158.5 395.5 159.5 392.5 160.5 395.5 163.5 395.5 165.5 392.5 167.5 395.5 167.5 395.5 168.5 398.5 169.5 395.5 171.5 391.5 173.5 395.5 179.5 395.5 181.5 399.5 183.5 395.5 185.5 391.5 189.5 397.5 190.5 395.5 192.5 397.5 196.5 392.5 197.5 395.5 198.5 393.5 199.5 395.5 202.5 400.5 205.5 395.5 210.5 395.5 211.5 397.5 212.5 395.5 213.5 395.5 215.5 399.5 217.5 395.5 220.5 395.5 222.5 399.5 226.5 393.5 227.5 395.5 228.5 393.5 229.5 395.5 231.5 398.5 233.5 395.5 235.5 398.5 239.5 393.5 240.5 395.5 242.5 391.5 244.5 395.5 245.5 395.5 246.5 393.5 248.5 400.5 250.5 395.5 253.5 400.5 256.5 395.5 261.5 395.5 263.5 392.5 267.5 398.5 268.5 395.5 270.5 398.5 272.5 395.5 275.5 395.5 277.5 391.5 279.5 395.5 281.5 391.5 283.5 395.5 289.5 395.5 292.5 400.5 295.5 395.5 295.5 395.5 307.5 395.5 306.5 395.5 306.5 347.6 307.5 344.8 307.5 299.6 308.5 296.9 308.5 258.5 308.5 258.5 314.5 258.5 315.5 256.5 316.5 258.5 317.5 260.5 319.5 255.5 320.5 258.5 322.5 255.5 326.5 262.5 328.5 258.5 330.5 261.5 332.5 258.5 332.5 258.5 334.5 256.5 338.5 260.5 339.5 258.5 340.5 260.5 341.5 258.5 342.5 256.5 344.5 263.5 346.5 258.5 349.5 263.5 352.5 258.5 355.5 258.5 356.5 260.5 357.5 258.5 360.5 258.5 362.5 260.5 364.5 258.5 367.5 258.5 368.5 260.5 369.5 258.5 369.5 258.5 370.5 261.5 372.5 256.5 373.5 258.5 374.5 256.5 375.5 258.5 378.5 258.5 380.5 262.5 382.5 258.5 384.5 258.5 386.5 262.5 388.5 258.5 389.5 258.5 390.5 256.5 391.5 258.5 394.5 258.5 397.5 263.5 400.5 258.5 402.5 258.5 404.5 262.5 406.5 258.5 407.5 256.5 408.5 258.5 410.5 258.5 411.5 261.5 412.5 258.5 414.5 262.5 416.5 258.5 418.5 255.5 422.5 260.5 423.5 258.5 425.5 261.5 427.5 258.5 431.5 258.5 433.5 255.5 437.5 260.5 438.5 258.5 440.5 262.5 442.5 258.5 443.5 260.5 444.5 258.5 444.5 258.5 445.5 255.5 446.5 258.5 447.5 258.5 449.5 261.5 453.5 255.5 454.5 258.5 456.5 256.5 458.5 258.5 460.5 258.5 462.5 255.5 466.5 262.5 468.5 258.5 470.5 262.5 472.5 258.5 477.5 258.5 480.5 262.5 483.5 258.5 486.5 258.5 488.5 255.5 490.5 258.5 490.5 258.5 491.5 256.5 492.5 258.5 495.5 258.5 498.5 262.5 504.5 255.5 505.5 258.5 506.5 256.5 507.5 258.5 508.5 256.5 509.5 258.5 510.5 255.5 511.5 258.5 517.5 258.5 518.5 260.5 519.5 258.5 521.5 258.5 523.5 255.5 525.5 258.5 529.5 258.5 530.5 261.5 532.5 255.5 533.5 258.5 534.5 255.5 535.5 258.5 537.5 255.5 539.5 258.5 545.5 258.5 547.5 262.5 549.5 258.5 550.5 256.5 551.5 258.5 555.5 258.5 557.5 255.5 559.5 258.5 564.5 258.5 565.5 256.5 567.5 263.5 569.5 258.5 570.5 261.5 571.5 258.5 573.5 262.5 577.5 255.5 578.5 258.5 579.5 255.5 580.5 258.5 580.5 258.5 581.5 258.5 580.5 258.5 580.5 306.4 581.5 309.2 581.5 354.4 582.5 357.1 582.5 395.5 582.5 395.5 582.5 395.5 584.5 391.5 586.5 395.5 586.5 395.5 589.5 400.5 595.5 392.5 596.5 395.5 598.5 392.5 600.5 395.5 602.5 395.5 604.5 399.5 606.5 395.5 607.5 393.5 608.5 395.5 611.5 395.5 613.5 398.5 615.5 395.5 620.5 395.5 622.5 391.5 624.5 395.5 625.5 398.5 627.5 393.5 628.5 395.5 629.5 393.5 630.5 395.5 635.5 395.5 637.5 398.5 641.5 391.5 643.5 395.5 644.5 393.5 645.5 395.5 646.5 393.5 647.5 395.5 647.5 395.5 648.5 398.5 649.5 395.5 650.5 398.5 651.5 395.5 652.5 395.5 654.5 398.5 656.5 395.5 659.5 395.5 660.5 397.5 661.5 395.5 663.5 398.5 667.5 391.5 669.5 395.5 670.5 393.5 671.5 395.5 671.5 395.5 673.5 392.5 675.5 395.5 680.5 395.5 681.5 397.5 682.5 395.5 683.5 395.5 685.5 392.5 687.5 395.5 687.5 395.5 689.5 391.5 693.5 398.5 694.5 395.5 697.5 400.5 700.5 395.5 703.5 395.5 706.5 399.5 709.5 395.5 709.5 395.5 712.5 400.5 715.5 395.5 716.5 393.5 717.5 395.5 720.5 400.5 726.5 392.5 727.5 395.5 729.5 391.5 731.5 395.5 735.5 395.5 737.5 400.5 739.5 395.5 740.5 397.5 741.5 395.5 745.5 395.5 746.5 393.5 747.5 395.5 750.5 399.5 753.5 395.5 755.5 395.5 756.5 392.5 758.5 397.5 759.5 395.5 760.5 398.5 761.5 395.5 762.5 398.5 763.5 395.5 765.5 399.5 769.5 391.5 771.5 395.5 772.5 393.5 773.5 395.5 775.5 395.5 777.5 391.5 779.5 395.5 780.5 395.5 782.5 393.5 784.5 395.5 788.5 395.5 790.5 397.5 792.5 395.5 795.5 395.5 796.5 393.5 797.5 395.5 797.5 395.5 799.5 399.5 801.5 395.5 803.5 398.5 805.5 395.5 809.5 395.5 810.5 393.5 811.5 395.5 812.5 393.5 814.5 397.5 815.5 395.5 817.5 398.5 819.5 395.5 825.5 395.5 827.5 400.5 831.5 392.5 832.5 395.5 834.5 391.5 836.5 395.5 837.5 395.5 838.5 393.5 839.5 395.5 841.5 391.5 843.5 395.5 843.5 395.5 854.5 395.5 853.5 395.5 853.5 347.6 854.5 344.8 854.5 299.6 855.5 296.9 855.5 258.5 855.5 258.5 860.5 258.5 861.5 256.5 863.5 261.5 864.5 258.5 866.5 261.5 868.5 258.5 874.5 258.5 876.5 255.5 880.5 260.5 881.5 258.5 882.5 261.5 883.5 258.5 885.5 255.5 887.5 258.5 891.5 258.5 894.5 263.5 900.5 256.5 901.5 258.5 902.5 256.5 904.5 260.5 905.5 258.5 907.5 261.5 911.5 255.5 912.5 258.5 913.5 255.5 914.5 258.5 916.5 255.5 918.5 258.5 919.5 258.5 920.5 260.5 922.5 255.5 923.5 258.5 924.5 256.5 926.5 260.5 927.5 258.5 929.5 262.5 931.5 258.5 933.5 255.5 935.5 258.5 937.5 258.5 938.5 255.5 940.5 262.5 942.5 258.5 944.5 260.5 946.5 258.5 948.5 258.5 950.5 261.5 952.5 258.5 958.5 258.5 959.5 261.5 960.5 258.5 963.5 258.5 964.5 261.5 965.5 258.5 966.5 258.5 968.5 263.5 970.5 258.5 974.5 258.5 976.5 255.5 978.5 258.5 980.5 258.5 981.5 255.5 982.5 258.5 986.5 258.5 987.5 255.5 988.5 258.5 989.5 258.5 991.5 261.5 993.5 258.5 995.5 262.5 997.5 258.5 1001.5 258.5 1004.5 263.5 1007.5 258.5 1012.5 258.5 1013.5 260.5 1014.5 258.5 1017.5 258.5 1020.5 263.5 1023.5 258.5 1025.5 258.5 1027.5 262.5 1029.5 258.5 1030.5 258.5 1031.5 256.5 1032.5 258.5 1037.5 258.5 1038.5 261.5 1039.5 258.5 1045.5 258.5 1047.5 255.5 1049.5 258.5 1051.5 260.5 1053.5 258.5 1059.5 258.5 1060.5 256.5 1062.5 263.5 1064.5 258.5 1067.5 262.5 1070.5 258.5 1074.5 258.5 1075.5 260.5 1077.5 255.5 1078.5 258.5 1080.5 255.5 1082.5 258.5 1085.5 258.5 1087.5 263.5 1089.5 258.5 1093.5 258.5 1096.5 263.5 1099.5 258.5 1101.5 260.5 1103.5 258.5 1106.5 258.5 1107.5 256.5 1108.5 258.5 1110.5 256.5 1114.5 260.5 1115.5 258.5 1117.5 260.5 1119.5 258.5 1119.5 258.5 1126.5 258.5 1125.5 258.5 1125.5 306.4 1126.5 309.2 1126.5 354.4 1127.5 357.1 1127.5 395.5 1127.5 395.5 1133.5 395.5 1136.5 399.5 1139.5 395.5 1141.5 391.5 1143.5 395.5 1145.5 395.5 1148.5 400.5 1151.5 395.5 1153.5 392.5 1155.5 395.5 1155.5 395.5 1157.5 399.5 1159.5 395.5 1164.5 395.5 1166.5 399.5 1168.5 395.5 1172.5 395.5 1173.5 397.5 1174.5 395.5 1176.5 395.5 1177.5 392.5 1179.5 397.5 1180.5 395.5 1181.5 398.5 1182.5 395.5 1184.5 395.5 1187.5 399.5 1190.5 395.5 1192.5 395.5 1193.5 397.5 1194.5 395.5 1195.5 395.5 1196.5 393.5 1197.5 395.5 1202.5 395.5 1205.5 400.5 1208.5 395.5 1210.5 395.5 1212.5 399.5 1214.5 395.5 1214.5 395.5 1216.5 399.5 1218.5 395.5 1220.5 391.5 1222.5 395.5 1226.5 395.5 1228.5 391.5 1230.5 395.5 1236.5 395.5 1238.5 397.5 1240.5 395.5 1242.5 399.5 1244.5 395.5 1247.5 395.5 1249.5 399.5 1251.5 395.5 1252.5 395.5 1253.5 397.5 1254.5 395.5 1255.5 397.5 1256.5 395.5 1262.5 395.5 1264.5 398.5 1266.5 395.5 1268.5 399.5 1272.5 391.5 1274.5 395.5 1275.5 393.5 1277.5 399.5 1279.5 395.5 1281.5 398.5 1283.5 395.5 1287.5 395.5 1288.5 393.5 1289.5 395.5 1293.5 395.5 1294.5 393.5 1296.5 398.5 1297.5 395.5 1298.5 397.5 1299.5 395.5 1301.5 398.5 1303.5 395.5 1303.5 395.5 1305.5 392.5 1307.5 395.5 1309.5 400.5 1311.5 395.5 1314.5 395.5 1316.5 399.5 1318.5 395.5 1320.5 399.5 1322.5 395.5 1328.5 395.5 1330.5 399.5 1332.5 395.5 1333.5 398.5 1334.5 395.5 1336.5 399.5 1340.5 392.5 1341.5 395.5 1344.5 391.5 1347.5 395.5 1348.5 395.5 1350.5 398.5 1352.5 395.5 1353.5 395.5 1355.5 392.5 1357.5 395.5 1358.5 397.5 1359.5 395.5 1359.5 395.5 1362.5 400.5 1365.5 395.5 1366.5 393.5 1367.5 395.5 1368.5 398.5 1369.5 395.5 1371.5 393.5 1373.5 395.5 1375.5 395.5 1377.5 392.5 1381.5 399.5 1383.5 395.5 1385.5 397.5 1387.5 395.5 1387.5 395.5 1400.5 395.5 1399.5 395.5 1399.5 347.6 1400.5 344.8 1400.5 299.6 1401.5 296.9 1401.5 258.5 1401.5 258.5 1402.5 258.5 1403.5 256.5 1404.5 258.5 1407.5 258.5 1408.5 260.5 1410.5 255.5 1411.5 258.5 1412.5 255.5 1413.5 258.5 1414.5 258.5 1417.5 262.5 1423.5 256.5 1424.5 258.5 1425.5 256.5 1426.5 258.5 1431.5 258.5 1432.5 256.5 1433.5 258.5 1438.5 258.5 1441.5 262.5 1444.5 258.5 1447.5 258.5 1448.5 261.5 1449.5 258.5 1450.5 256.5 1451.5 258.5 1455.5 258.5 1457.5 263.5 1459.5 258.5 1463.5 258.5 1465.5 256.5 1469.5 261.5 1470.5 258.5 1472.5 262.5 1476.5 255.5 1477.5 258.5 1479.5 255.5 1481.5 258.5 1485.5 258.5 1487.5 263.5 1491.5 256.5 1492.5 258.5 1493.5 256.5 1494.5 258.5 1496.5 262.5 1498.5 258.5 1500.5 261.5 1504.5 255.5 1505.5 258.5 1507.5 256.5 1509.5 258.5 1510.5 258.5 1511.5 256.5 1513.5 260.5 1514.5 258.5 1516.5 260.5 1520.5 256.5 1521.5 258.5 1522.5 255.5 1523.5 258.5 1523.5 258.5 1524.5 260.5 1525.5 258.5 1530.5 258.5 1531.5 260.5 1532.5 258.5 1533.5 260.5 1534.5 258.5 1536.5 255.5 1540.5 261.5 1541.5 258.5 1542.5 261.5 1543.5 258.5 1545.5 255.5 1547.5 258.5 1550.5 258.5 1553.5 263.5 1559.5 256.5 1560.5 258.5 1561.5 255.5 1563.5 261.5 1564.5 258.5 1566.5 262.5 1568.5 258.5 1569.5 256.5 1570.5 258.5 1572.5 258.5 1573.5 260.5 1574.5 258.5 1575.5 260.5 1576.5 258.5 1578.5 258.5 1579.5 256.5 1580.5 258.5 1581.5 255.5 1582.5 258.5 1587.5 258.5 1588.5 261.5 1589.5 258.5 1589.5 258.5 1591.5 263.5 1593.5 258.5 1594.5 258.5 1595.5 260.5 1596.5 258.5 1602.5 258.5 1605.5 263.5 1608.5 258.5 1609.5 258.5 1610.5 256.5 1612.5 261.5 1613.5 258.5 1614.5 260.5 1615.5 258.5 1615.5 258.5 1617.5 262.5 1621.5 256.5 1622.5 258.5 1623.5 256.5 1624.5 258.5 1626.5 256.5 1628.5 258.5 1633.5 258.5 1636.5 263.5 1639.5 258.5 1642.5 258.5 1643.5 260.5 1644.5 258.5 1647.5 258.5 1650.5 263.5 1656.5 255.5 1657.5 258.5 1659.5 255.5 1661.5 258.5 1662.5 255.5 1663.5 258.5 1663.5 258.5 1673.5 258.5 1672.5 258.5 1672.5 306.4 1673.5 309.2 1673.5 354.4 1674.5 357.1 1674.5 395.5 1674.5 395.5 1674.5 395.5 1675.5 393.5 1676.5 395.5 1678.5 395.5 1679.5 393.5 1680.5 395.5 1680.5 395.5 1682.5 391.5 1684.5 395.5 1685.5 393.5 1686.5 395.5 1689.5 395.5 1691.5 393.5 1693.5 395.5 1695.5 398.5 1697.5 395.5 1701.5 395.5 1703.5 398.5 1705.5 395.5 1706.5 398.5 1708.5 392.5 1709.5 395.5 1710.5 393.5 1711.5 395.5 1711.5 395.5 1714.5 400.5 1720.5 392.5 1721.5 395.5 1723.5 391.5 1725.5 395.5 1727.5 391.5 1731.5 399.5 1733.5 395.5 1735.5 399.5 1737.5 395.5 1738.5 397.5 1739.5 395.5 1742.5 395.5 1744.5 391.5 1746.5 395.5 1748.5 395.5 1750.5 392.5 1752.5 395.5 1757.5 395.5 1758.5 392.5 1760.5 399.5 1762.5 395.5 1764.5 399.5 1766.5 395.5 1767.5 392.5 1768.5 395.5 1774.5 395.5 1776.5 392.5 1778.5 395.5 1779.5 393.5 1780.5 395.5 1785.5 395.5 1787.5 399.5 1789.5 395.5 1795.5 395.5 1796.5 397.5 1798.5 391.5 1800.5 395.5 1802.5 393.5 1804.5 395.5 1806.5 395.5 1809.5 400.5 1812.5 395.5 1814.5 399.5 1818.5 391.5 1820.5 395.5 1822.5 392.5 1824.5 395.5 1829.5 395.5 1830.5 393.5 1832.5 398.5 1833.5 395.5 1836.5 400.5 1839.5 395.5 1844.5 395.5 1846.5 400.5 1850.5 391.5 1852.5 395.5 1854.5 391.5 1856.5 395.5 1858.5 399.5 1860.5 395.5 1863.5 400.5 1866.5 395.5 1872.5 395.5 1873.5 397.5 1874.5 395.5 1876.5 392.5 1878.5 395.5 1879.5 393.5 1880.5 395.5 1882.5 395.5 1883.5 398.5 1884.5 395.5 1884.5 395.5 1887.5 399.5 1890.5 395.5 1891.5 393.5 1892.5 395.5 1893.5 395.5 1895.5 391.5 1897.5 395.5 1897.5 395.5 1898.5 392.5 1900.5 400.5 1902.5 395.5 1904.5 398.5 1906.5 395.5 1910.5 395.5 1911.5 393.5 1912.5 395.5 1914.5 391.5 1918.5 397.5 1919.5 395.5 1921.5 399.5 1923.5 395.5 1924.5 395.5 1925.5 393.5 1926.5 395.5 1928.5 395.5 1930.5 399.5 1932.5 395.5 1932.5 395.5 1934.5 399.5 1936.5 395.5 1936.5 395.5 1946.5 395.5 1945.5 395.5 1945.5 347.6 1946.5 344.8 1946.5 299.6 1947.5 296.9 1947.5 258.5 1947.5 258.5 1950.5 258.5 1953.5 263.5 1956.5 258.5 1956.5 258.5 1958.5 263.5 1960.5 258.5 1960.5 258.5 1962.5 261.5 1964.5 258.5 1970.5 258.5 1971.5 261.5 1972.5 258.5 1977.5 258.5 1979.5 263.5 1981.5 258.5 1983.5 258.5 1984.5 256.5 1985.5 258.5 1985.5 258.5 1986.5 260.5 1987.5 258.5 1987.5 258.5 1989.5 261.5 1993.5 256.5 1994.5 258.5 1995.5 256.5 1996.5 258.5 1997.5 258.5 2000.5 262.5 2003.5 258.5 2008.5 258.5 2009.5 261.5 2010.5 258.5 2014.5 258.5 2016.5 263.5 2018.5 258.5 2023.5 258.5 2025.5 262.5 2027.5 258.5 2028.5 256.5 2029.5 258.5 2029.5 258.5 2031.5 262.5 2033.5 258.5 2035.5 258.5 2037.5 262.5 2039.5 258.5 2039.5 258.5 2040.5 261.5 2042.5 256.5 2043.5 258.5 2044.5 256.5 2046.5 262.5 2048.5 258.5 2050.5 262.5 2052.5 258.5 2055.5 258.5 2056.5 261.5 2057.5 258.5 2059.5 258.5 2061.5 260.5 2063.5 258.5 2064.5 256.5 2066.5 261.5 2067.5 258.5 2069.5 263.5 2071.5 258.5 2071.5 258.5 2073.5 262.5 2075.5 258.5 2079.5 258.5 2080.5 255.5 2081.5 258.5 2082.5 256.5 2083.5 258.5 2089.5 258.5 2090.5 260.5 2091.5 258.5 2094.5 258.5 2095.5 255.5 2096.5 258.5 2099.5 258.5 2101.5 262.5 2103.5 258.5 2105.5 255.5 2107.5 258.5 2108.5 255.5 2110.5 260.5 2111.5 258.5 2113.5 262.5 2115.5 258.5 2118.5 263.5 2121.5 258.5 2121.5 258.5 2122.5 261.5 2123.5 258.5 2126.5 258.5 2129.5 263.5 2132.5 258.5 2133.5 258.5 2135.5 255.5 2139.5 261.5 2140.5 258.5 2141.5 260.5 2142.5 258.5 2146.5 258.5 2147.5 256.5 2148.5 258.5 2151.5 258.5 2154.5 263.5 2157.5 258.5 2161.5 258.5 2163.5 255.5 2165.5 258.5 2170.5 258.5 2171.5 260.5 2172.5 258.5 2174.5 262.5 2176.5 258.5 2176.5 258.5 2178.5 262.5 2180.5 258.5 2181.5 261.5 2183.5 255.5 2184.5 258.5 2186.5 255.5 2188.5 258.5 2191.5 258.5 2194.5 263.5 2197.5 258.5 2197.5 258.5 2213.5 258.5" stroke="#ffff00"/>
<path d="M38.5 611.5 41.5 611.5 43.5 608.5 45.5 611.5 54.5 611.5 55.5 613.5 57.5 609.5 58.5 611.5 59.5 609.5 60.5 611.5 61.5 611.5 63.5 614.5 65.5 611.5 73.5 611.5 74.5 614.5 75.5 611.5 76.5 611.5 78.5 614.5 80.5 611.5 88.5 611.5 89.5 609.5 90.5 611.5 100.5 611.5 102.5 607.5 104.5 611.5 107.5 611.5 109.5 608.5 111.5 611.5 119.5 611.5 120.5 614.5 121.5 611.5 123.5 615.5 127.5 607.5 129.5 611.5 131.5 607.5 135.5 615.5 137.5 611.5 139.5 614.5 141.5 611.5 146.5 611.5 147.5 608.5 149.5 615.5 151.5 611.5 153.5 615.5 157.5 608.5 158.5 611.5 160.5 609.5 162.5 611.5 170.5 611.5 171.5 613.5 172.5 611.5 180.5 611.5 181.5 613.5 182.5 611.5 184.5 608.5 186.5 611.5 188.5 615.5 190.5 611.5 199.5 611.5 200.5 609.5 201.5 611.5 207.5 611.5 210.5 607.5 213.5 611.5 223.5 611.5 225.5 607.5 229.5 614.5 230.5 611.5 232.5 615.5 234.5 611.5 241.5 611.5 242.5 613.5 243.5 611.5 244.5 609.5 245.5 611.5 247.5 611.5 250.5 607.5 253.5 611.5 263.5 611.5 264.5 613.5 266.5 607.5 268.5 611.5 269.5 609.5 270.5 611.5 271.5 613.5 273.5 607.5 275.5 611.5 276.5 609.5 277.5 611.5 278.5 611.5 280.5 615.5 282.5 611.5 284.5 615.5 288.5 607.5 290.5 611.5 292.5 608.5 294.5 611.5 294.5 611.5 305.5 611.5 304.5 611.5 304.5 564.2 305.5 561.5 305.5 517.0 306.5 514.3 306.5 476.5 306.5 476.5 315.5 476.5 316.5 473.5 317.5 476.5 318.5 474.5 319.5 476.5 327.5 476.5 329.5 480.5 331.5 476.5 338.5 476.5 339.5 474.5 340.5 476.5 350.5 476.5 352.5 479.5 354.5 476.5 358.5 476.5 359.5 478.5 360.5 476.5 370.5 476.5 372.5 480.5 374.5 476.5 384.5 476.5 385.5 478.5 386.5 476.5 393.5 476.5 394.5 478.5 395.5 476.5 398.5 476.5 400.5 479.5 402.5 476.5 404.5 473.5 406.5 476.5 408.5 480.5 410.5 476.5 411.5 476.5 412.5 473.5 414.5 480.5 416.5 476.5 417.5 479.5 418.5 476.5 421.5 471.5 424.5 476.5 431.5 476.5 432.5 473.5 433.5 476.5 439.5 476.5 442.5 471.5 445.5 476.5 447.5 480.5 449.5 476.5 455.5 476.5 457.5 473.5 459.5 476.5 460.5 476.5 461.5 478.5 463.5 471.5 465.5 476.5 466.5 474.5 467.5 476.5 471.5 476.5 474.5 471.5 480.5 479.5 481.5 476.5 482.5 478.5 483.5 476.5 484.5 476.5 485.5 474.5 486.5 476.5 492.5 476.5 494.5 480.5 496.5 476.5 498.5 472.5 500.5 476.5 502.5 471.5 506.5 478.5 507.5 476.5 509.5 480.5 511.5 476.5 514.5 476.5 516.5 479.5 520.5 474.5 521.5 476.5 523.5 473.5 527.5 480.5 529.5 476.5 531.5 480.5 533.5 476.5 537.5 476.5 538.5 479.5 539.5 476.5 549.5 476.5 551.5 471.5 555.5 480.5 557.5 476.5 559.5 479.5 563.5 472.5 565.5 476.5 566.5 474.5 567.5 476.5 567.5 476.5 579.5 476.5 578.5 476.5 578.5 523.8 579.5 526.5 579.5 571.0 580.5 573.7 580.5 611.5 580.5 611.5 590.5 611.5 592.5 613.5 596.5 607.5 598.5 611.5 599.5 609.5 601.5 614.5 602.5 611.5 604.5 615.5 606.5 611.5 616.5 611.5 617.5 613.5 618.5 611.5 625.5 611.5 626.5 608.5 628.5 614.5 629.5 611.5 631.5 615.5 633.5 611.5 637.5 611.5 638.5 608.5 639.5 611.5 644.5 611.5 645.5 613.5 646.5 611.5 654.5 611.5 655.5 609.5 656.5 611.5 664.5 611.5 666.5 614.5 668.5 611.5 676.5 611.5 677.5 613.5 678.5 611.5 683.5 611.5 684.5 613.5 685.5 611.5 686.5 609.5 688.5 614.5 689.5 611.5 690.5 613.5 691.5 611.5 700.5 611.5 701.5 609.5 703.5 615.5 705.5 611.5 707.5 613.5 709.5 611.5 711.5 614.5 715.5 608.5 716.5 611.5 718.5 608.5 722.5 614.5 723.5 611.5 724.5 613.5 725.5 611.5 733.5 611.5 735.5 614.5 737.5 611.5 745.5 611.5 747.5 615.5 749.5 611.5 750.5 611.5 751.5 608.5 752.5 611.5 756.5 611.5 757.5 613.5 758.5 611.5 760.5 615.5 762.5 611.5 766.5 611.5 767.5 609.5 768.5 611.5 775.5 611.5 777.5 615.5 779.5 611.5 785.5 611.5 786.5 614.5 787.5 611.5 797.5 611.5 799.5 607.5 801.5 611.5 806.5 611.5 807.5 608.5 808.5 611.5 813.5 611.5 814.5 613.5 815.5 611.5 817.5 607.5 819.5 611.5 821.5 614.5 823.5 611.5 824.5 613.5 825.5 611.5 827.5 608.5 829.5 611.5 830.5 611.5 831.5 609.5 832.5 611.5 833.5 611.5 836.5 607.5 839.5 611.5 839.5 611.5 852.5 611.5 851.5 611.5 851.5 564.2 852.5 561.5 852.5 517.0 853.5 514.3 853.5 476.5 853.5 476.5 857.5 476.5 859.5 480.5 861.5 476.5 862.5 473.5 863.5 476.5 865.5 476.5 867.5 472.5 869.5 476.5 872.5 476.5 875.5 472.5 878.5 476.5 882.5 476.5 883.5 478.5 884.5 476.5 893.5 476.5 895.5 472.5 899.5 478.5 900.5 476.5 901.5 478.5 903.5 473.5 904.5 476.5 906.5 471.5 908.5 476.5 914.5 476.5 917.5 471.5 920.5 476.5 921.5 474.5 922.5 476.5 927.5 476.5 929.5 480.5 931.5 476.5 937.5 476.5 939.5 472.5 943.5 480.5 945.5 476.5 946.5 478.5 947.5 476.5 949.5 472.5 953.5 478.5 954.5 476.5 956.5 479.5 958.5 476.5 960.5 476.5 962.5 472.5 964.5 476.5 966.5 472.5 968.5 476.5 974.5 476.5 976.5 478.5 978.5 476.5 980.5 479.5 982.5 476.5 985.5 476.5 986.5 474.5 987.5 476.5 996.5 476.5 997.5 478.5 998.5 476.5 999.5 476.5 1001.5 472.5 1003.5 476.5 1005.5 476.5 1006.5 479.5 1007.5 476.5 1014.5 476.5 1016.5 472.5 1018.5 476.5 1022.5 476.5 1025.5 471.5 1031.5 479.5 1032.5 476.5 1034.5 479.5 1036.5 476.5 1037.5 476.5 1038.5 478.5 1039.5 476.5 1043.5 476.5 1045.5 473.5 1047.5 476.5 1055.5 476.5 1057.5 480.5 1059.5 476.5 1062.5 476.5 1063.5 473.5 1064.5 476.5 1072.5 476.5 1074.5 473.5 1076.5 476.5 1078.5 476.5 1079.5 474.5 1080.5 476.5 1089.5 476.5 1091.5 473.5 1093.5 476.5 1100.5 476.5 1101.5 474.5 1103.5 479.5 1104.5 476.5 1105.5 478.5 1106.5 476.5 1106.5 476.5 1124.5 476.5 1123.5 476.5 1123.5 523.8 1124.5 526.5 1124.5 571.0 1125.5 573.7 1125.5 611.5 1125.5 611.5 1133.5 611.5 1135.5 607.5 1137.5 611.5 1139.5 614.5 1141.5 611.5 1145.5 611.5 1147.5 607.5 1149.5 611.5 1152.5 611.5 1154.5 615.5 1158.5 607.5 1160.5 611.5 1162.5 608.5 1164.5 611.5 1171.5 611.5 1172.5 613.5 1174.5 607.5 1176.5 611.5 1178.5 607.5 1180.5 611.5 1181.5 608.5 1182.5 611.5 1185.5 611.5 1187.5 608.5 1189.5 611.5 1191.5 615.5 1193.5 611.5 1200.5 611.5 1202.5 615.5 1204.5 611.5 1206.5 608.5 1208.5 611.5 1216.5 611.5 1218.5 615.5 1220.5 611.5 1221.5 611.5 1223.5 615.5 1225.5 611.5 1234.5 611.5 1236.5 615.5 1238.5 611.5 1242.5 611.5 1244.5 608.5 1246.5 611.5 1247.5 608.5 1248.5 611.5 1256.5 611.5 1257.5 608.5 1258.5 611.5 1259.5 609.5 1260.5 611.5 1266.5 611.5 1268.5 615.5 1270.5 611.5 1273.5 611.5 1276.5 615.5 1279.5 611.5 1280.5 609.5 1281.5 611.5 1285.5 611.5 1287.5 615.5 1289.5 611.5 1290.5 609.5 1291.5 611.5 1292.5 611.5 1294.5 613.5 1296.5 611.5 1297.5 611.5 1298.5 613.5 1300.5 609.5 1301.5 611.5 1303.5 608.5 1305.5 611.5 1313.5 611.5 1315.5 615.5 1317.5 611.5 1322.5 611.5 1324.5 607.5 1326.5 611.5 1336.5 611.5 1338.5 607.5 1340.5 611.5 1342.5 614.5 1346.5 607.5 1348.5 611.5 1349.5 608.5 1350.5 611.5 1352.5 611.5 1353.5 614.5 1354.5 611.5 1357.5 611.5 1359.5 615.5 1361.5 611.5 1370.5 611.5 1371.5 613.5 1372.5 611.5 1375.5 607.5 1378.5 611.5 1382.5 611.5 1383.5 609.5 1384.5 611.5 1385.5 614.5 1386.5 611.5 1388.5 607.5 1390.5 611.5 1390.5 611.5 1398.5 611.5 1397.5 611.5 1397.5 564.2 1398.5 561.5 1398.5 517.0 1399.5 514.3 1399.5 476.5 1399.5 476.5 1400.5 476.5 1402.5 472.5 1404.5 476.5 1414.5 476.5 1416.5 471.5 1420.5 479.5 1421.5 476.5 1423.5 480.5 1427.5 471.5 1429.5 476.5 1432.5 471.5 1435.5 476.5 1436.5 474.5 1437.5 476.5 1446.5 476.5 1447.5 474.5 1448.5 476.5 1456.5 476.5 1458.5 472.5 1460.5 476.5 1463.5 476.5 1465.5 479.5 1467.5 476.5 1476.5 476.5 1479.5 471.5 1482.5 476.5 1484.5 479.5 1486.5 476.5 1491.5 476.5 1492.5 479.5 1493.5 476.5 1498.5 476.5 1500.5 480.5 1502.5 476.5 1511.5 476.5 1512.5 478.5 1513.5 476.5 1521.5 476.5 1522.5 474.5 1523.5 476.5 1525.5 471.5 1527.5 476.5 1537.5 476.5 1540.5 471.5 1543.5 476.5 1545.5 479.5 1547.5 476.5 1548.5 476.5 1550.5 472.5 1552.5 476.5 1561.5 476.5 1564.5 471.5 1570.5 478.5 1571.5 476.5 1572.5 479.5 1573.5 476.5 1576.5 471.5 1579.5 476.5 1581.5 480.5 1585.5 471.5 1587.5 476.5 1588.5 474.5 1589.5 476.5 1594.5 476.5 1595.5 479.5 1596.5 476.5 1603.5 476.5 1604.5 478.5 1605.5 476.5 1606.5 474.5 1607.5 476.5 1610.5 476.5 1612.5 479.5 1614.5 476.5 1615.5 478.5 1616.5 476.5 1623.5 476.5 1624.5 478.5 1625.5 476.5 1626.5 479.5 1627.5 476.5 1630.5 476.5 1632.5 479.5 1634.5 476.5 1643.5 476.5 1644.5 473.5 1646.5 479.5 1647.5 476.5 1649.5 479.5 1651.5 476.5 1653.5 479.5 1655.5 476.5 1656.5 474.5 1657.5 476.5 1657.5 476.5 1671.5 476.5 1670.5 476.5 1670.5 523.8 1671.5 526.5 1671.5 571.0 1672.5 573.7 1672.5 611.5 1672.5 611.5 1673.5 611.5 1675.5 615.5 1677.5 611.5 1679.5 611.5 1681.5 607.5 1683.5 611.5 1691.5 611.5 1692.5 613.5 1693.5 611.5 1702.5 611.5 1703.5 609.5 1704.5 611.5 1707.5 611.5 1708.5 608.5 1709.5 611.5 1718.5 611.5 1720.5 607.5 1722.5 611.5 1724.5 611.5 1726.5 608.5 1728.5 611.5 1738.5 611.5 1739.5 609.5 1740.5 611.5 1741.5 611.5 1742.5 613.5 1743.5 611.5 1748.5 611.5 1749.5 613.5 1751.5 607.5 1753.5 611.5 1754.5 608.5 1755.5 611.5 1761.5 611.5 1763.5 615.5 1765.5 611.5 1766.5 614.5 1767.5 611.5 1776.5 611.5 1777.5 614.5 1778.5 611.5 1781.5 611.5 1783.5 608.5 1785.5 611.5 1790.5 611.5 1792.5 608.5 1794.5 611.5 1797.5 611.5 1798.5 609.5 1800.5 613.5 1801.5 611.5 1803.5 615.5 1805.5 611.5 1807.5 611.5 1809.5 614.5 1811.5 611.5 1812.5 613.5 1813.5 611.5 1814.5 609.5 1815.5 611.5 1817.5 609.5 1821.5 614.5 1822.5 611.5 1823.5 613.5 1824.5 611.5 1825.5 611.5 1827.5 607.5 1829.5 611.5 1830.5 608.5 1832.5 614.5 1833.5 611.5 1834.5 613.5 1835.5 611.5 1842.5 611.5 1844.5 614.5 1848.5 607.5 1850.5 611.5 1853.5 607.5 1856.5 611.5 1862.5 611.5 1864.5 615.5 1868.5 609.5 1869.5 611.5 1870.5 609.5 1871.5 611.5 1876.5 611.5 1879.5 607.5 1885.5 613.5 1886.5 611.5 1888.5 615.5 1890.5 611.5 1892.5 615.5 1894.5 611.5 1895.5 611.5 1897.5 609.5 1899.5 611.5 1909.5 611.5 1910.5 608.5 1911.5 611.5 1913.5 611.5 1914.5 613.5 1915.5 611.5 1916.5 611.5 1917.5 609.5 1918.5 611.5 1923.5 611.5 1924.5 614.5 1925.5 611.5 1928.5 611.5 1930.5 609.5 1932.5 611.5 1932.5 611.5 1944.5 611.5 1943.5 611.5 1943.5 564.2 1944.5 561.5 1944.5 517.0 1945.5 514.3 1945.5 476.5 1945.5 476.5 1953.5 476.5 1954.5 474.5 1955.5 476.5 1959.5 476.5 1960.5 478.5 1962.5 473.5 1963.5 476.5 1965.5 472.5 1967.5 476.5 1972.5 476.5 1974.5 471.5 1978.5 478.5 1979.5 476.5 1981.5 479.5 1985.5 474.5 1986.5 476.5 1988.5 471.5 1990.5 476.5 1996.5 476.5 1997.5 474.5 1998.5 476.5 2008.5 476.5 2009.5 478.5 2010.5 476.5 2020.5 476.5 2022.5 480.5 2026.5 474.5 2027.5 476.5 2028.5 474.5 2029.5 476.5 2032.5 476.5 2033.5 479.5 2034.5 476.5 2044.5 476.5 2045.5 473.5 2046.5 476.5 2056.5 476.5 2058.5 478.5 2060.5 476.5 2065.5 476.5 2067.5 474.5 2069.5 476.5 2070.5 478.5 2071.5 476.5 2073.5 479.5 2075.5 476.5 2078.5 471.5 2081.5 476.5 2083.5 476.5 2085.5 480.5 2087.5 476.5 2088.5 473.5 2089.5 476.5 2097.5 476.5 2098.5 473.5 2099.5 476.5 2109.5 476.5 2111.5 478.5 2113.5 476.5 2116.5 476.5 2118.5 471.5 2120.5 476.5 2124.5 476.5 2126.5 472.5 2128.5 476.5 2138.5 476.5 2139.5 478.5 2140.5 476.5 2143.5 480.5 2146.5 476.5 2149.5 476.5 2150.5 474.5 2151.5 476.5 2155.5 476.5 2157.5 473.5 2159.5 476.5 2164.5 476.5 2165.5 478.5 2167.5 474.5 2168.5 476.5 2170.5 473.5 2172.5 476.5 2177.5 476.5 2179.5 479.5 2181.5 476.5 2183.5 476.5 2185.5 479.5 2187.5 476.5 2193.5 476.5 2195.5 472.5 2197.5 476.5 2199.5 476.5 2201.5 480.5 2203.5 476.5 2203.5 476.5 2213.5 476.5" stroke="#8e8e8e"/>
<path d="M38.5 611.5 41.5 611.5 43.5 607.5 47.5 614.5 48.5 611.5 49.5 613.5 50.5 611.5 60.5 611.5 62.5 614.5 64.5 611.5 66.5 615.5 68.5 611.5 70.5 611.5 72.5 615.5 74.5 611.5 77.5 611.5 79.5 607.5 81.5 611.5 93.5 611.5 95.5 608.5 99.5 614.5 100.5 611.5 102.5 614.5 106.5 608.5 107.5 611.5 109.5 607.5 111.5 611.5 121.5 611.5 123.5 607.5 125.5 611.5 133.5 611.5 134.5 609.5 135.5 611.5 136.5 613.5 137.5 611.5 143.5 611.5 144.5 614.5 145.5 611.5 156.5 611.5 157.5 613.5 158.5 611.5 168.5 611.5 170.5 614.5 172.5 611.5 183.5 611.5 185.5 607.5 187.5 611.5 189.5 611.5 190.5 613.5 191.5 611.5 197.5 611.5 199.5 607.5 201.5 611.5 203.5 608.5 205.5 611.5 213.5 611.5 215.5 608.5 217.5 611.5 224.5 611.5 225.5 613.5 226.5 611.5 227.5 613.5 228.5 611.5 229.5 611.5 230.5 614.5 231.5 611.5 233.5 611.5 234.5 609.5 235.5 611.5 243.5 611.5 245.5 614.5 247.5 611.5 249.5 614.5 251.5 611.5 252.5 613.5 253.5 611.5 265.5 611.5 267.5 607.5 269.5 611.5 271.5 607.5 273.5 611.5 275.5 608.5 277.5 611.5 280.5 611.5 281.5 608.5 282.5 611.5 293.5 611.5 294.5 609.5 295.5 611.5 295.5 611.5 307.5 611.5 306.5 611.5 306.5 564.6 307.5 561.9 307.5 517.7 308.5 515.0 308.5 477.5 308.5 477.5 317.5 477.5 318.5 479.5 319.5 477.5 328.5 477.5 329.5 475.5 331.5 479.5 332.5 477.5 334.5 481.5 336.5 477.5 342.5 477.5 344.5 473.5 346.5 477.5 347.5 477.5 350.5 481.5 353.5 477.5 357.5 477.5 359.5 475.5 361.5 477.5 364.5 473.5 367.5 477.5 374.5 477.5 376.5 474.5 380.5 480.5 381.5 477.5 382.5 479.5 383.5 477.5 385.5 477.5 386.5 479.5 387.5 477.5 389.5 481.5 393.5 474.5 394.5 477.5 396.5 472.5 400.5 480.5 401.5 477.5 403.5 480.5 405.5 477.5 407.5 481.5 409.5 477.5 411.5 477.5 412.5 479.5 413.5 477.5 415.5 481.5 417.5 477.5 422.5 477.5 424.5 479.5 426.5 477.5 435.5 477.5 438.5 481.5 441.5 477.5 446.5 477.5 447.5 474.5 448.5 477.5 458.5 477.5 459.5 479.5 461.5 473.5 463.5 477.5 464.5 475.5 465.5 477.5 468.5 477.5 470.5 473.5 472.5 477.5 481.5 477.5 482.5 474.5 483.5 477.5 484.5 477.5 485.5 479.5 486.5 477.5 488.5 481.5 490.5 477.5 493.5 477.5 495.5 481.5 497.5 477.5 509.5 477.5 511.5 474.5 513.5 477.5 519.5 477.5 521.5 480.5 523.5 477.5 524.5 475.5 525.5 477.5 526.5 477.5 527.5 480.5 528.5 477.5 537.5 477.5 538.5 479.5 539.5 477.5 540.5 475.5 541.5 477.5 543.5 481.5 547.5 473.5 549.5 477.5 550.5 475.5 552.5 480.5 553.5 477.5 555.5 480.5 557.5 477.5 558.5 477.5 561.5 472.5 564.5 477.5 564.5 477.5 581.5 477.5 580.5 477.5 580.5 524.4 581.5 527.1 581.5 571.3 582.5 574.0 582.5 611.5 582.5 611.5 592.5 611.5 593.5 614.5 594.5 611.5 597.5 611.5 599.5 608.5 601.5 611.5 603.5 608.5 607.5 614.5 608.5 611.5 609.5 613.5 610.5 611.5 611.5 609.5 612.5 611.5 614.5 611.5 615.5 614.5 616.5 611.5 626.5 611.5 627.5 608.5 628.5 611.5 632.5 611.5 634.5 614.5 636.5 611.5 641.5 611.5 642.5 609.5 643.5 611.5 648.5 611.5 650.5 615.5 654.5 609.5 655.5 611.5 656.5 609.5 658.5 613.5 659.5 611.5 661.5 615.5 663.5 611.5 671.5 611.5 673.5 607.5 675.5 611.5 681.5 611.5 683.5 607.5 685.5 611.5 687.5 608.5 691.5 615.5 693.5 611.5 694.5 613.5 696.5 609.5 697.5 611.5 698.5 609.5 699.5 611.5 701.5 611.5 702.5 608.5 703.5 611.5 704.5 608.5 705.5 611.5 710.5 611.5 711.5 614.5 712.5 611.5 714.5 609.5 716.5 611.5 722.5 611.5 724.5 614.5 728.5 607.5 730.5 611.5 731.5 609.5 733.5 613.5 734.5 611.5 735.5 613.5 736.5 611.5 744.5 611.5 747.5 607.5 750.5 611.5 758.5 611.5 760.5 614.5 764.5 607.5 766.5 611.5 769.5 607.5 772.5 611.5 773.5 614.5 775.5 607.5 777.5 611.5 779.5 608.5 783.5 615.5 785.5 611.5 786.5 613.5 787.5 611.5 799.5 611.5 801.5 614.5 803.5 611.5 807.5 611.5 808.5 609.5 809.5 611.5 810.5 611.5 811.5 609.5 812.5 611.5 822.5 611.5 823.5 609.5 824.5 611.5 834.5 611.5 835.5 614.5 836.5 611.5 838.5 611.5 840.5 615.5 842.5 611.5 842.5 611.5 854.5 611.5 853.5 611.5 853.5 564.6 854.5 561.9 854.5 517.7 855.5 515.0 855.5 477.5 855.5 477.5 864.5 477.5 865.5 474.5 866.5 477.5 867.5 477.5 868.5 474.5 869.5 477.5 873.5 477.5 876.5 481.5 882.5 474.5 883.5 477.5 885.5 472.5 889.5 480.5 890.5 477.5 892.5 481.5 896.5 474.5 897.5 477.5 900.5 472.5 903.5 477.5 915.5 477.5 917.5 481.5 919.5 477.5 920.5 475.5 921.5 477.5 923.5 477.5 925.5 481.5 927.5 477.5 929.5 477.5 930.5 480.5 931.5 477.5 933.5 481.5 935.5 477.5 937.5 481.5 939.5 477.5 944.5 477.5 946.5 474.5 948.5 477.5 958.5 477.5 960.5 472.5 962.5 477.5 965.5 472.5 968.5 477.5 976.5 477.5 978.5 472.5 980.5 477.5 992.5 477.5 993.5 479.5 994.5 477.5 1001.5 477.5 1003.5 481.5 1007.5 472.5 1009.5 477.5 1010.5 475.5 1011.5 477.5 1020.5 477.5 1023.5 472.5 1026.5 477.5 1034.5 477.5 1035.5 479.5 1036.5 477.5 1037.5 480.5 1038.5 477.5 1039.5 477.5 1040.5 479.5 1041.5 477.5 1043.5 472.5 1045.5 477.5 1050.5 477.5 1051.5 479.5 1052.5 477.5 1054.5 481.5 1056.5 477.5 1067.5 477.5 1068.5 475.5 1069.5 477.5 1074.5 477.5 1077.5 472.5 1080.5 477.5 1083.5 477.5 1085.5 480.5 1087.5 477.5 1088.5 475.5 1089.5 477.5 1097.5 477.5 1098.5 475.5 1100.5 479.5 1101.5 477.5 1103.5 480.5 1105.5 477.5 1105.5 477.5 1126.5 477.5 1125.5 477.5 1125.5 524.4 1126.5 527.1 1126.5 571.3 1127.5 574.0 1127.5 611.5 1127.5 611.5 1129.5 611.5 1131.5 607.5 1135.5 613.5 1136.5 611.5 1139.5 615.5 1142.5 611.5 1148.5 611.5 1150.5 615.5 1152.5 611.5 1163.5 611.5 1164.5 614.5 1166.5 608.5 1167.5 611.5 1169.5 608.5 1171.5 611.5 1173.5 609.5 1175.5 611.5 1177.5 615.5 1179.5 611.5 1181.5 608.5 1183.5 611.5 1188.5 611.5 1190.5 608.5 1194.5 615.5 1196.5 611.5 1198.5 614.5 1200.5 611.5 1203.5 611.5 1204.5 609.5 1206.5 615.5 1208.5 611.5 1209.5 613.5 1210.5 611.5 1211.5 609.5 1213.5 615.5 1215.5 611.5 1216.5 614.5 1217.5 611.5 1225.5 611.5 1227.5 608.5 1231.5 613.5 1232.5 611.5 1233.5 613.5 1234.5 611.5 1236.5 615.5 1240.5 607.5 1242.5 611.5 1243.5 608.5 1244.5 611.5 1254.5 611.5 1256.5 615.5 1258.5 611.5 1261.5 611.5 1263.5 607.5 1267.5 613.5 1268.5 611.5 1269.5 613.5 1270.5 611.5 1279.5 611.5 1280.5 609.5 1281.5 611.5 1283.5 614.5 1285.5 611.5 1287.5 611.5 1290.5 607.5 1293.5 611.5 1294.5 613.5 1295.5 611.5 1297.5 611.5 1298.5 608.5 1299.5 611.5 1311.5 611.5 1313.5 607.5 1315.5 611.5 1324.5 611.5 1326.5 613.5 1328.5 611.5 1329.5 609.5 1330.5 611.5 1334.5 611.5 1336.5 614.5 1338.5 611.5 1349.5 611.5 1351.5 608.5 1353.5 611.5 1354.5 613.5 1355.5 611.5 1364.5 611.5 1366.5 607.5 1368.5 611.5 1371.5 615.5 1377.5 607.5 1379.5 611.5 1381.5 607.5 1383.5 611.5 1383.5 611.5 1400.5 611.5 1399.5 611.5 1399.5 564.6 1400.5 561.9 1400.5 517.7 1401.5 515.0 1401.5 477.5 1401.5 477.5 1408.5 477.5 1410.5 480.5 1412.5 477.5 1420.5 477.5 1421.5 480.5 1422.5 477.5 1426.5 477.5 1428.5 480.5 1430.5 477.5 1437.5 477.5 1439.5 474.5 1441.5 477.5 1448.5 477.5 1450.5 473.5 1452.5 477.5 1464.5 477.5 1466.5 473.5 1468.5 477.5 1469.5 480.5 1470.5 477.5 1471.5 475.5 1473.5 479.5 1474.5 477.5 1476.5 481.5 1480.5 473.5 1482.5 477.5 1483.5 474.5 1484.5 477.5 1485.5 477.5 1487.5 481.5 1489.5 477.5 1491.5 474.5 1493.5 477.5 1504.5 477.5 1505.5 475.5 1506.5 477.5 1509.5 472.5 1512.5 477.5 1513.5 474.5 1514.5 477.5 1517.5 472.5 1523.5 480.5 1524.5 477.5 1525.5 480.5 1526.5 477.5 1533.5 477.5 1535.5 473.5 1539.5 480.5 1540.5 477.5 1542.5 481.5 1546.5 473.5 1548.5 477.5 1550.5 474.5 1552.5 477.5 1554.5 477.5 1556.5 481.5 1558.5 477.5 1567.5 477.5 1570.5 472.5 1573.5 477.5 1574.5 475.5 1575.5 477.5 1576.5 475.5 1578.5 481.5 1580.5 477.5 1582.5 480.5 1584.5 477.5 1585.5 479.5 1586.5 477.5 1590.5 477.5 1592.5 480.5 1594.5 477.5 1596.5 477.5 1599.5 473.5 1602.5 477.5 1609.5 477.5 1611.5 473.5 1613.5 477.5 1615.5 473.5 1617.5 477.5 1619.5 474.5 1621.5 477.5 1627.5 477.5 1629.5 473.5 1631.5 477.5 1632.5 480.5 1633.5 477.5 1639.5 477.5 1641.5 481.5 1645.5 475.5 1646.5 477.5 1647.5 475.5 1648.5 477.5 1657.5 477.5 1658.5 479.5 1659.5 477.5 1659.5 477.5 1673.5 477.5 1672.5 477.5 1672.5 524.4 1673.5 527.1 1673.5 571.3 1674.5 574.0 1674.5 611.5 1674.5 611.5 1675.5 611.5 1677.5 607.5 1679.5 611.5 1691.5 611.5 1692.5 613.5 1693.5 611.5 1694.5 611.5 1695.5 608.5 1696.5 611.5 1702.5 611.5 1703.5 608.5 1704.5 611.5 1706.5 611.5 1707.5 609.5 1708.5 611.5 1711.5 611.5 1714.5 615.5 1717.5 611.5 1726.5 611.5 1727.5 609.5 1728.5 611.5 1731.5 611.5 1732.5 614.5 1733.5 611.5 1740.5 611.5 1742.5 607.5 1744.5 611.5 1747.5 615.5 1750.5 611.5 1756.5 611.5 1758.5 607.5 1760.5 611.5 1768.5 611.5 1770.5 608.5 1772.5 611.5 1774.5 611.5 1776.5 607.5 1778.5 611.5 1779.5 611.5 1780.5 608.5 1781.5 611.5 1786.5 611.5 1788.5 615.5 1790.5 611.5 1791.5 608.5 1792.5 611.5 1803.5 611.5 1804.5 613.5 1806.5 608.5 1807.5 611.5 1808.5 608.5 1810.5 615.5 1812.5 611.5 1815.5 615.5 1821.5 608.5 1822.5 611.5 1823.5 608.5 1824.5 611.5 1828.5 611.5 1829.5 609.5 1830.5 611.5 1832.5 614.5 1836.5 609.5 1837.5 611.5 1838.5 609.5 1840.5 614.5 1841.5 611.5 1843.5 614.5 1845.5 611.5 1850.5 611.5 1852.5 615.5 1854.5 611.5 1866.5 611.5 1867.5 613.5 1869.5 609.5 1870.5 611.5 1872.5 607.5 1874.5 611.5 1875.5 611.5 1877.5 615.5 1879.5 611.5 1891.5 611.5 1892.5 609.5 1894.5 613.5 1895.5 611.5 1897.5 615.5 1899.5 611.5 1910.5 611.5 1912.5 607.5 1914.5 611.5 1915.5 611.5 1917.5 608.5 1919.5 611.5 1921.5 607.5 1923.5 611.5 1930.5 611.5 1932.5 607.5 1934.5 611.5 1937.5 615.5 1940.5 611.5 1940.5 611.5 1946.5 611.5 1945.5 611.5 1945.5 564.6 1946.5 561.9 1946.5 517.7 1947.5 515.0 1947.5 477.5 1947.5 477.5 1958.5 477.5 1959.5 480.5 1960.5 477.5 1966.5 477.5 1968.5 481.5 1970.5 477.5 1971.5 477.5 1973.5 480.5 1975.5 477.5 1985.5 477.5 1986.5 475.5 1987.5 477.5 1989.5 481.5 1991.5 477.5 1993.5 481.5 1995.5 477.5 2005.5 477.5 2006.5 479.5 2007.5 477.5 2009.5 477.5 2011.5 481.5 2013.5 477.5 2016.5 477.5 2019.5 481.5 2022.5 477.5 2023.5 479.5 2024.5 477.5 2032.5 477.5 2035.5 473.5 2038.5 477.5 2050.5 477.5 2052.5 473.5 2056.5 479.5 2057.5 477.5 2059.5 481.5 2061.5 477.5 2067.5 477.5 2068.5 479.5 2069.5 477.5 2080.5 477.5 2082.5 474.5 2084.5 477.5 2087.5 477.5 2088.5 479.5 2089.5 477.5 2101.5 477.5 2103.5 474.5 2105.5 477.5 2107.5 473.5 2109.5 477.5 2111.5 477.5 2113.5 481.5 2115.5 477.5 2127.5 477.5 2129.5 472.5 2131.5 477.5 2141.5 477.5 2144.5 472.5 2147.5 477.5 2155.5 477.5 2157.5 481.5 2159.5 477.5 2160.5 477.5 2162.5 480.5 2164.5 477.5 2167.5 477.5 2169.5 472.5 2171.5 477.5 2173.5 477.5 2175.5 474.5 2177.5 477.5 2188.5 477.5 2189.5 479.5 2190.5 477.5 2190.5 477.5 2213.5 477.5" stroke="#3db3ee"/>
<path d="M38.5 833.5 40.5 833.5 41.5 835.5 42.5 833.5 47.5 833.5 49.5 829.5 51.5 833.5 64.5 833.5 66.5 829.5 68.5 833.5 76.5 833.5 77.5 830.5 78.5 833.5 83.5 833.5 85.5 835.5 87.5 833.5 92.5 833.5 93.5 831.5 95.5 837.5 97.5 833.5 98.5 835.5 99.5 833.5 106.5 833.5 107.5 831.5 108.5 833.5 117.5 833.5 119.5 835.5 121.5 833.5 127.5 833.5 129.5 837.5 131.5 833.5 133.5 833.5 136.5 837.5 139.5 833.5 145.5 833.5 146.5 835.5 147.5 833.5 155.5 833.5 156.5 835.5 157.5 833.5 162.5 833.5 163.5 831.5 165.5 836.5 166.5 833.5 168.5 836.5 170.5 833.5 171.5 835.5 172.5 833.5 181.5 833.5 183.5 836.5 185.5 833.5 190.5 833.5 192.5 831.5 194.5 833.5 196.5 829.5 198.5 833.5 203.5 833.5 205.5 837.5 207.5 833.5 217.5 833.5 218.5 835.5 219.5 833.5 232.5 833.5 233.5 830.5 234.5 833.5 240.5 833.5 241.5 835.5 242.5 833.5 247.5 833.5 249.5 830.5 251.5 833.5 253.5 830.5 255.5 833.5 266.5 833.5 268.5 829.5 270.5 833.5 278.5 833.5 279.5 835.5 280.5 833.5 281.5 836.5 282.5 833.5 282.5 833.5 305.5 833.5 304.5 833.5 304.5 785.9 305.5 783.2 305.5 738.3 306.5 735.6 306.5 697.5 306.5 697.5 319.5 697.5 321.5 693.5 323.5 697.5 332.5 697.5 333.5 699.5 334.5 697.5 335.5 695.5 336.5 697.5 341.5 697.5 342.5 699.5 344.5 695.5 345.5 697.5 347.5 694.5 349.5 697.5 352.5 702.5 355.5 697.5 363.5 697.5 364.5 695.5 365.5 697.5 378.5 697.5 379.5 694.5 380.5 697.5 381.5 694.5 382.5 697.5 386.5 697.5 388.5 695.5 390.5 697.5 400.5 697.5 402.5 694.5 406.5 699.5 407.5 697.5 409.5 701.5 413.5 694.5 414.5 697.5 415.5 694.5 416.5 697.5 423.5 697.5 425.5 695.5 427.5 697.5 429.5 697.5 430.5 694.5 431.5 697.5 444.5 697.5 445.5 695.5 446.5 697.5 450.5 697.5 452.5 693.5 454.5 697.5 459.5 697.5 461.5 701.5 465.5 693.5 467.5 697.5 468.5 694.5 469.5 697.5 475.5 697.5 476.5 699.5 477.5 697.5 483.5 697.5 484.5 695.5 485.5 697.5 495.5 697.5 496.5 695.5 497.5 697.5 508.5 697.5 510.5 701.5 512.5 697.5 525.5 697.5 527.5 700.5 529.5 697.5 535.5 697.5 537.5 694.5 541.5 701.5 543.5 697.5 544.5 699.5 545.5 697.5 549.5 697.5 551.5 700.5 553.5 697.5 563.5 697.5 565.5 694.5 567.5 697.5 568.5 699.5 569.5 697.5 569.5 697.5 579.5 697.5 578.5 697.5 578.5 745.1 579.5 747.8 579.5 792.7 580.5 795.4 580.5 833.5 580.5 833.5 589.5 833.5 591.5 829.5 593.5 833.5 597.5 833.5 599.5 829.5 601.5 833.5 603.5 833.5 605.5 836.5 607.5 833.5 615.5 833.5 616.5 830.5 617.5 833.5 618.5 830.5 619.5 833.5 621.5 829.5 623.5 833.5 625.5 837.5 627.5 833.5 635.5 833.5 637.5 835.5 639.5 833.5 644.5 833.5 645.5 835.5 646.5 833.5 652.5 833.5 654.5 830.5 656.5 833.5 661.5 833.5 663.5 836.5 665.5 833.5 666.5 836.5 667.5 833.5 680.5 833.5 683.5 829.5 686.5 833.5 688.5 837.5 690.5 833.5 704.5 833.5 706.5 837.5 708.5 833.5 716.5 833.5 717.5 830.5 718.5 833.5 729.5 833.5 731.5 829.5 735.5 836.5 736.5 833.5 737.5 836.5 739.5 829.5 741.5 833.5 743.5 829.5 745.5 833.5 747.5 833.5 748.5 836.5 749.5 833.5 757.5 833.5 758.5 835.5 759.5 833.5 765.5 833.5 766.5 835.5 767.5 833.5 772.5 833.5 773.5 830.5 774.5 833.5 785.5 833.5 786.5 835.5 787.5 833.5 796.5 833.5 797.5 831.5 798.5 833.5 804.5 833.5 806.5 836.5 808.5 833.5 812.5 833.5 815.5 837.5 818.5 833.5 832.5 833.5 834.5 829.5 836.5 833.5 836.5 833.5 852.5 833.5 851.5 833.5 851.5 785.9 852.5 783.2 852.5 738.3 853.5 735.6 853.5 697.5 853.5 697.5 860.5 697.5 862.5 700.5 864.5 697.5 868.5 697.5 869.5 699.5 870.5 697.5 873.5 697.5 875.5 693.5 877.5 697.5 885.5 697.5 887.5 693.5 889.5 697.5 903.5 697.5 905.5 700.5 909.5 695.5 910.5 697.5 913.5 693.5 916.5 697.5 928.5 697.5 930.5 701.5 932.5 697.5 934.5 693.5 936.5 697.5 948.5 697.5 950.5 700.5 954.5 693.5 956.5 697.5 957.5 695.5 959.5 701.5 961.5 697.5 963.5 701.5 965.5 697.5 976.5 697.5 978.5 700.5 982.5 694.5 983.5 697.5 984.5 695.5 985.5 697.5 992.5 697.5 994.5 702.5 996.5 697.5 1007.5 697.5 1009.5 694.5 1011.5 697.5 1018.5 697.5 1019.5 699.5 1020.5 697.5 1031.5 697.5 1034.5 702.5 1040.5 693.5 1042.5 697.5 1043.5 695.5 1044.5 697.5 1046.5 694.5 1048.5 697.5 1050.5 700.5 1052.5 697.5 1063.5 697.5 1066.5 702.5 1069.5 697.5 1080.5 697.5 1082.5 694.5 1084.5 697.5 1098.5 697.5 1100.5 693.5 1104.5 701.5 1106.5 697.5 1108.5 700.5 1110.5 697.5 1110.5 697.5 1124.5 697.5 1123.5 697.5 1123.5 745.1 1124.5 747.8 1124.5 792.7 1125.5 795.4 1125.5 833.5 1125.5 833.5 1135.5 833.5 1137.5 829.5 1139.5 833.5 1146.5 833.5 1147.5 831.5 1148.5 833.5 1150.5 829.5 1152.5 833.5 1154.5 835.5 1156.5 833.5 1170.5 833.5 1173.5 837.5 1176.5 833.5 1182.5 833.5 1184.5 829.5 1186.5 833.5 1193.5 833.5 1195.5 837.5 1197.5 833.5 1207.5 833.5 1210.5 837.5 1213.5 833.5 1224.5 833.5 1225.5 835.5 1226.5 833.5 1227.5 835.5 1228.5 833.5 1230.5 833.5 1231.5 836.5 1232.5 833.5 1238.5 833.5 1239.5 831.5 1240.5 833.5 1244.5 833.5 1245.5 835.5 1246.5 833.5 1254.5 833.5 1257.5 837.5 1260.5 833.5 1262.5 833.5 1264.5 835.5 1266.5 833.5 1277.5 833.5 1278.5 836.5 1279.5 833.5 1286.5 833.5 1288.5 837.5 1290.5 833.5 1304.5 833.5 1307.5 829.5 1310.5 833.5 1320.5 833.5 1321.5 831.5 1322.5 833.5 1323.5 831.5 1324.5 833.5 1329.5 833.5 1330.5 830.5 1331.5 833.5 1332.5 830.5 1333.5 833.5 1335.5 836.5 1337.5 833.5 1347.5 833.5 1349.5 837.5 1351.5 833.5 1363.5 833.5 1365.5 835.5 1367.5 833.5 1377.5 833.5 1379.5 836.5 1381.5 833.5 1381.5 833.5 1398.5 833.5 1397.5 833.5 1397.5 785.9 1398.5 783.2 1398.5 738.3 1399.5 735.6 1399.5 697.5 1399.5 697.5 1407.5 697.5 1408.5 700.5 1409.5 697.5 1416.5 697.5 1417.5 699.5 1418.5 697.5 1429.5 697.5 1431.5 700.5 1433.5 697.5 1445.5 697.5 1447.5 693.5 1449.5 697.5 1451.5 695.5 1453.5 697.5 1460.5 697.5 1462.5 695.5 1464.5 697.5 1470.5 697.5 1472.5 693.5 1474.5 697.5 1484.5 697.5 1486.5 701.5 1488.5 697.5 1495.5 697.5 1497.5 701.5 1501.5 694.5 1502.5 697.5 1505.5 693.5 1511.5 699.5 1512.5 697.5 1513.5 700.5 1514.5 697.5 1519.5 697.5 1521.5 701.5 1523.5 697.5 1527.5 697.5 1529.5 693.5 1531.5 697.5 1535.5 697.5 1536.5 695.5 1537.5 697.5 1540.5 702.5 1543.5 697.5 1549.5 697.5 1551.5 693.5 1553.5 697.5 1563.5 697.5 1565.5 694.5 1567.5 697.5 1569.5 702.5 1571.5 697.5 1574.5 697.5 1575.5 695.5 1576.5 697.5 1580.5 697.5 1582.5 694.5 1584.5 697.5 1586.5 694.5 1590.5 699.5 1591.5 697.5 1594.5 702.5 1597.5 697.5 1604.5 697.5 1607.5 702.5 1610.5 697.5 1623.5 697.5 1624.5 695.5 1625.5 697.5 1628.5 702.5 1631.5 697.5 1641.5 697.5 1642.5 699.5 1643.5 697.5 1647.5 697.5 1648.5 695.5 1649.5 697.5 1654.5 697.5 1655.5 695.5 1656.5 697.5 1656.5 697.5 1671.5 697.5 1670.5 697.5 1670.5 745.1 1671.5 747.8 1671.5 792.7 1672.5 795.4 1672.5 833.5 1672.5 833.5 1682.5 833.5 1683.5 835.5 1684.5 833.5 1686.5 833.5 1687.5 835.5 1688.5 833.5 1689.5 830.5 1690.5 833.5 1704.5 833.5 1705.5 835.5 1706.5 833.5 1718.5 833.5 1719.5 835.5 1720.5 833.5 1732.5 833.5 1734.5 836.5 1736.5 833.5 1737.5 835.5 1739.5 829.5 1741.5 833.5 1743.5 829.5 1745.5 833.5 1757.5 833.5 1759.5 837.5 1761.5 833.5 1768.5 833.5 1770.5 830.5 1772.5 833.5 1780.5 833.5 1782.5 836.5 1786.5 831.5 1787.5 833.5 1788.5 830.5 1789.5 833.5 1800.5 833.5 1802.5 837.5 1804.5 833.5 1808.5 833.5 1810.5 830.5 1812.5 833.5 1819.5 833.5 1821.5 837.5 1823.5 833.5 1824.5 836.5 1825.5 833.5 1829.5 833.5 1831.5 829.5 1833.5 833.5 1842.5 833.5 1844.5 837.5 1846.5 833.5 1859.5 833.5 1861.5 836.5 1863.5 833.5 1874.5 833.5 1875.5 831.5 1877.5 836.5 1878.5 833.5 1879.5 835.5 1881.5 831.5 1882.5 833.5 1884.5 829.5 1886.5 833.5 1888.5 833.5 1890.5 837.5 1894.5 829.5 1896.5 833.5 1897.5 831.5 1898.5 833.5 1904.5 833.5 1906.5 829.5 1908.5 833.5 1910.5 829.5 1914.5 836.5 1915.5 833.5 1916.5 836.5 1917.5 833.5 1922.5 833.5 1925.5 837.5 1928.5 833.5 1928.5 833.5 1944.5 833.5 1943.5 833.5 1943.5 785.9 1944.5 783.2 1944.5 738.3 1945.5 735.6 1945.5 697.5 1945.5 697.5 1950.5 697.5 1952.5 694.5 1954.5 697.5 1961.5 697.5 1962.5 699.5 1964.5 695.5 1965.5 697.5 1968.5 693.5 1971.5 697.5 1976.5 697.5 1978.5 693.5 1980.5 697.5 1991.5 697.5 1993.5 701.5 1995.5 697.5 2006.5 697.5 2007.5 699.5 2008.5 697.5 2020.5 697.5 2022.5 701.5 2026.5 693.5 2028.5 697.5 2029.5 694.5 2030.5 697.5 2034.5 697.5 2036.5 694.5 2038.5 697.5 2039.5 694.5 2040.5 697.5 2049.5 697.5 2050.5 694.5 2051.5 697.5 2059.5 697.5 2061.5 693.5 2063.5 697.5 2077.5 697.5 2078.5 694.5 2079.5 697.5 2080.5 695.5 2081.5 697.5 2094.5 697.5 2096.5 699.5 2098.5 697.5 2100.5 697.5 2102.5 694.5 2104.5 697.5 2106.5 701.5 2108.5 697.5 2114.5 697.5 2115.5 694.5 2116.5 697.5 2123.5 697.5 2125.5 694.5 2127.5 697.5 2140.5 697.5 2141.5 695.5 2142.5 697.5 2151.5 697.5 2152.5 700.5 2153.5 697.5 2165.5 697.5 2167.5 700.5 2171.5 694.5 2172.5 697.5 2174.5 693.5 2176.5 697.5 2187.5 697.5 2188.5 695.5 2189.5 697.5 2198.5 697.5 2199.5 694.5 2200.5 697.5 2200.5 697.5 2213.5 697.5" stroke="#8e8e8e"/>
<path d="M38.5 833.5 43.5 833.5 46.5 829.5 49.5 833.5 55.5 833.5 56.5 831.5 57.5 833.5 71.5 833.5 72.5 835.5 73.5 833.5 82.5 833.5 83.5 835.5 84.5 833.5 90.5 833.5 91.5 830.5 92.5 833.5 100.5 833.5 101.5 836.5 102.5 833.5 107.5 833.5 108.5 835.5 109.5 833.5 121.5 833.5 122.5 830.5 123.5 833.5 128.5 833.5 129.5 830.5 130.5 833.5 139.5 833.5 142.5 829.5 145.5 833.5 163.5 833.5 164.5 835.5 165.5 833.5 175.5 833.5 176.5 836.5 177.5 833.5 191.5 833.5 193.5 831.5 195.5 833.5 198.5 833.5 200.5 836.5 202.5 833.5 217.5 833.5 218.5 830.5 220.5 837.5 222.5 833.5 223.5 835.5 224.5 833.5 238.5 833.5 239.5 835.5 240.5 833.5 244.5 833.5 246.5 837.5 248.5 833.5 263.5 833.5 264.5 835.5 265.5 833.5 268.5 833.5 270.5 829.5 272.5 833.5 273.5 831.5 274.5 833.5 279.5 833.5 280.5 831.5 281.5 833.5 284.5 833.5 285.5 830.5 286.5 833.5 289.5 833.5 290.5 831.5 291.5 833.5 291.5 833.5 307.5 833.5 306.5 833.5 306.5 785.9 307.5 783.2 307.5 738.3 308.5 735.6 308.5 697.5 308.5 697.5 313.5 697.5 314.5 700.5 315.5 697.5 322.5 697.5 323.5 700.5 324.5 697.5 328.5 697.5 330.5 701.5 332.5 697.5 344.5 697.5 346.5 693.5 348.5 697.5 360.5 697.5 361.5 699.5 362.5 697.5 363.5 695.5 364.5 697.5 369.5 697.5 371.5 701.5 373.5 697.5 376.5 702.5 379.5 697.5 381.5 700.5 383.5 697.5 397.5 697.5 399.5 693.5 401.5 697.5 415.5 697.5 417.5 693.5 419.5 697.5 436.5 697.5 439.5 702.5 445.5 695.5 446.5 697.5 448.5 693.5 450.5 697.5 458.5 697.5 460.5 700.5 464.5 695.5 465.5 697.5 467.5 693.5 469.5 697.5 477.5 697.5 480.5 702.5 483.5 697.5 486.5 702.5 489.5 697.5 497.5 697.5 498.5 695.5 499.5 697.5 517.5 697.5 520.5 701.5 526.5 695.5 527.5 697.5 528.5 695.5 529.5 697.5 538.5 697.5 540.5 694.5 542.5 697.5 544.5 695.5 546.5 697.5 555.5 697.5 556.5 695.5 558.5 700.5 559.5 697.5 560.5 699.5 561.5 697.5 561.5 697.5 581.5 697.5 580.5 697.5 580.5 745.1 581.5 747.8 581.5 792.7 582.5 795.4 582.5 833.5 582.5 833.5 599.5 833.5 601.5 835.5 603.5 833.5 611.5 833.5 612.5 831.5 613.5 833.5 627.5 833.5 629.5 829.5 631.5 833.5 638.5 833.5 639.5 836.5 640.5 833.5 643.5 829.5 646.5 833.5 647.5 835.5 648.5 833.5 657.5 833.5 658.5 836.5 659.5 833.5 676.5 833.5 677.5 836.5 678.5 833.5 694.5 833.5 695.5 835.5 696.5 833.5 700.5 833.5 701.5 831.5 702.5 833.5 703.5 831.5 705.5 835.5 706.5 833.5 708.5 837.5 710.5 833.5 727.5 833.5 728.5 835.5 729.5 833.5 736.5 833.5 738.5 829.5 740.5 833.5 752.5 833.5 754.5 829.5 756.5 833.5 773.5 833.5 775.5 830.5 777.5 833.5 778.5 831.5 779.5 833.5 796.5 833.5 797.5 831.5 798.5 833.5 816.5 833.5 818.5 836.5 820.5 833.5 831.5 833.5 833.5 829.5 835.5 833.5 835.5 833.5 854.5 833.5 853.5 833.5 853.5 785.9 854.5 783.2 854.5 738.3 855.5 735.6 855.5 697.5 855.5 697.5 867.5 697.5 869.5 694.5 871.5 697.5 879.5 697.5 881.5 700.5 883.5 697.5 898.5 697.5 901.5 701.5 904.5 697.5 919.5 697.5 921.5 701.5 923.5 697.5 926.5 697.5 928.5 693.5 932.5 702.5 934.5 697.5 935.5 700.5 936.5 697.5 940.5 697.5 942.5 701.5 944.5 697.5 959.5 697.5 961.5 700.5 965.5 695.5 966.5 697.5 968.5 695.5 970.5 697.5 977.5 697.5 978.5 695.5 979.5 697.5 990.5 697.5 992.5 701.5 994.5 697.5 1004.5 697.5 1006.5 695.5 1008.5 697.5 1011.5 702.5 1014.5 697.5 1016.5 694.5 1018.5 697.5 1035.5 697.5 1038.5 693.5 1044.5 699.5 1045.5 697.5 1047.5 701.5 1049.5 697.5 1059.5 697.5 1061.5 701.5 1063.5 697.5 1078.5 697.5 1079.5 695.5 1080.5 697.5 1081.5 695.5 1082.5 697.5 1086.5 697.5 1087.5 695.5 1089.5 701.5 1091.5 697.5 1093.5 699.5 1095.5 697.5 1104.5 697.5 1106.5 693.5 1110.5 699.5 1111.5 697.5 1112.5 700.5 1113.5 697.5 1113.5 697.5 1126.5 697.5 1125.5 697.5 1125.5 745.1 1126.5 747.8 1126.5 792.7 1127.5 795.4 1127.5 833.5 1127.5 833.5 1143.5 833.5 1145.5 837.5 1147.5 833.5 1157.5 833.5 1159.5 830.5 1161.5 833.5 1167.5 833.5 1169.5 837.5 1171.5 833.5 1175.5 833.5 1177.5 829.5 1179.5 833.5 1194.5 833.5 1195.5 831.5 1196.5 833.5 1200.5 833.5 1201.5 835.5 1202.5 833.5 1215.5 833.5 1217.5 831.5 1219.5 833.5 1229.5 833.5 1232.5 837.5 1235.5 833.5 1240.5 833.5 1241.5 831.5 1242.5 833.5 1247.5 833.5 1248.5 831.5 1249.5 833.5 1251.5 830.5 1255.5 836.5 1256.5 833.5 1258.5 837.5 1260.5 833.5 1273.5 833.5 1275.5 829.5 1277.5 833.5 1289.5 833.5 1291.5 830.5 1293.5 833.5 1309.5 833.5 1310.5 835.5 1312.5 830.5 1313.5 833.5 1314.5 831.5 1315.5 833.5 1331.5 833.5 1332.5 835.5 1334.5 830.5 1335.5 833.5 1337.5 830.5 1339.5 833.5 1356.5 833.5 1358.5 837.5 1362.5 831.5 1363.5 833.5 1365.5 830.5 1367.5 833.5 1376.5 833.5 1378.5 837.5 1380.5 833.5 1380.5 833.5 1400.5 833.5 1399.5 833.5 1399.5 785.9 1400.5 783.2 1400.5 738.3 1401.5 735.6 1401.5 697.5 1401.5 697.5 1409.5 697.5 1410.5 699.5 1411.5 697.5 1412.5 700.5 1413.5 697.5 1415.5 701.5 1417.5 697.5 1429.5 697.5 1431.5 702.5 1433.5 697.5 1447.5 697.5 1448.5 695.5 1449.5 697.5 1466.5 697.5 1467.5 700.5 1468.5 697.5 1470.5 694.5 1472.5 697.5 1474.5 700.5 1476.5 697.5 1489.5 697.5 1491.5 693.5 1493.5 697.5 1500.5 697.5 1502.5 693.5 1504.5 697.5 1505.5 694.5 1506.5 697.5 1520.5 697.5 1521.5 694.5 1522.5 697.5 1523.5 699.5 1524.5 697.5 1527.5 697.5 1528.5 694.5 1529.5 697.5 1532.5 697.5 1533.5 699.5 1534.5 697.5 1552.5 697.5 1554.5 693.5 1558.5 700.5 1559.5 697.5 1560.5 700.5 1561.5 697.5 1564.5 697.5 1565.5 694.5 1566.5 697.5 1575.5 697.5 1577.5 693.5 1579.5 697.5 1586.5 697.5 1587.5 699.5 1589.5 695.5 1590.5 697.5 1591.5 695.5 1592.5 697.5 1605.5 697.5 1607.5 700.5 1609.5 697.5 1620.5 697.5 1621.5 699.5 1623.5 694.5 1624.5 697.5 1626.5 695.5 1628.5 697.5 1632.5 697.5 1634.5 699.5 1636.5 697.5 1648.5 697.5 1650.5 693.5 1652.5 697.5 1652.5 697.5 1673.5 697.5 1672.5 697.5 1672.5 745.1 1673.5 747.8 1673.5 792.7 1674.5 795.4 1674.5 833.5 1674.5 833.5 1682.5 833.5 1683.5 835.5 1685.5 830.5 1686.5 833.5 1688.5 830.5 1690.5 833.5 1706.5 833.5 1707.5 836.5 1708.5 833.5 1715.5 833.5 1716.5 835.5 1717.5 833.5 1732.5 833.5 1733.5 835.5 1734.5 833.5 1743.5 833.5 1745.5 830.5 1747.5 833.5 1752.5 833.5 1753.5 835.5 1754.5 833.5 1769.5 833.5 1771.5 829.5 1773.5 833.5 1788.5 833.5 1790.5 836.5 1792.5 833.5 1793.5 836.5 1794.5 833.5 1805.5 833.5 1806.5 831.5 1807.5 833.5 1810.5 833.5 1811.5 831.5 1812.5 833.5 1813.5 835.5 1815.5 829.5 1817.5 833.5 1819.5 829.5 1821.5 833.5 1836.5 833.5 1838.5 837.5 1840.5 833.5 1846.5 833.5 1847.5 836.5 1849.5 831.5 1850.5 833.5 1852.5 829.5 1854.5 833.5 1868.5 833.5 1869.5 831.5 1870.5 833.5 1878.5 833.5 1880.5 837.5 1884.5 830.5 1885.5 833.5 1886.5 831.5 1887.5 833.5 1893.5 833.5 1895.5 837.5 1897.5 833.5 1914.5 833.5 1915.5 836.5 1916.5 833.5 1924.5 833.5 1925.5 836.5 1927.5 831.5 1928.5 833.5 1930.5 829.5 1932.5 833.5 1932.5 833.5 1946.5 833.5 1945.5 833.5 1945.5 785.9 1946.5 783.2 1946.5 738.3 1947.5 735.6 1947.5 697.5 1947.5 697.5 1956.5 697.5 1957.5 695.5 1958.5 697.5 1960.5 693.5 1962.5 697.5 1973.5 697.5 1975.5 695.5 1977.5 697.5 1978.5 695.5 1979.5 697.5 1990.5 697.5 1992.5 693.5 1994.5 697.5 2009.5 697.5 2011.5 693.5 2013.5 697.5 2030.5 697.5 2031.5 695.5 2033.5 701.5 2035.5 697.5 2037.5 702.5 2039.5 697.5 2057.5 697.5 2058.5 699.5 2059.5 697.5 2070.5 697.5 2072.5 701.5 2074.5 697.5 2078.5 697.5 2079.5 700.5 2080.5 697.5 2084.5 697.5 2086.5 701.5 2088.5 697.5 2090.5 694.5 2092.5 697.5 2100.5 697.5 2102.5 693.5 2104.5 697.5 2112.5 697.5 2113.5 699.5 2114.5 697.5 2119.5 697.5 2120.5 695.5 2122.5 701.5 2124.5 697.5 2126.5 700.5 2128.5 697.5 2129.5 695.5 2130.5 697.5 2148.5 697.5 2151.5 701.5 2157.5 695.5 2158.5 697.5 2159.5 694.5 2160.5 697.5 2171.5 697.5 2172.5 694.5 2173.5 697.5 2177.5 697.5 2180.5 693.5 2183.5 697.5 2190.5 697.5 2192.5 693.5 2194.5 697.5 2194.5 697.5 2213.5 697.5" stroke="#8e8e8e"/>
<path d="M38.5 1052.5 46.5 1052.5 48.5 1055.5 50.5 1052.5 58.5 1052.5 59.5 1054.5 60.5 1052.5 69.5 1052.5 71.5 1056.5 73.5 1052.5 84.5 1052.5 86.5 1049.5 88.5 1052.5 90.5 1048.5 92.5 1052.5 95.5 1052.5 96.5 1054.5 97.5 1052.5 108.5 1052.5 109.5 1050.5 110.5 1052.5 118.5 1052.5 119.5 1054.5 120.5 1052.5 122.5 1048.5 124.5 1052.5 126.5 1052.5 127.5 1055.5 128.5 1052.5 141.5 1052.5 143.5 1054.5 145.5 1052.5 153.5 1052.5 155.5 1056.5 157.5 1052.5 162.5 1052.5 164.5 1048.5 166.5 1052.5 168.5 1049.5 170.5 1052.5 178.5 1052.5 180.5 1048.5 182.5 1052.5 195.5 1052.5 196.5 1050.5 198.5 1054.5 199.5 1052.5 200.5 1054.5 201.5 1052.5 204.5 1052.5 206.5 1049.5 210.5 1056.5 212.5 1052.5 213.5 1055.5 214.5 1052.5 221.5 1052.5 223.5 1056.5 227.5 1050.5 228.5 1052.5 230.5 1049.5 232.5 1052.5 242.5 1052.5 243.5 1054.5 244.5 1052.5 250.5 1052.5 251.5 1050.5 252.5 1052.5 254.5 1049.5 256.5 1052.5 257.5 1050.5 258.5 1052.5 262.5 1052.5 263.5 1050.5 264.5 1052.5 266.5 1052.5 268.5 1056.5 270.5 1052.5 278.5 1052.5 280.5 1049.5 282.5 1052.5 286.5 1052.5 287.5 1054.5 288.5 1052.5 288.5 1052.5 305.5 1052.5 304.5 1052.5 304.5 1005.2 305.5 1002.5 305.5 958.0 306.5 955.3 306.5 917.5 306.5 917.5 312.5 917.5 313.5 920.5 314.5 917.5 325.5 917.5 326.5 915.5 327.5 917.5 331.5 917.5 333.5 922.5 335.5 917.5 336.5 915.5 338.5 921.5 340.5 917.5 343.5 922.5 346.5 917.5 349.5 917.5 350.5 914.5 351.5 917.5 352.5 919.5 353.5 917.5 355.5 917.5 356.5 919.5 358.5 913.5 360.5 917.5 362.5 914.5 364.5 917.5 368.5 917.5 371.5 922.5 374.5 917.5 384.5 917.5 386.5 920.5 388.5 917.5 402.5 917.5 403.5 914.5 405.5 921.5 407.5 917.5 409.5 921.5 413.5 913.5 415.5 917.5 416.5 914.5 417.5 917.5 430.5 917.5 432.5 914.5 436.5 922.5 438.5 917.5 439.5 920.5 440.5 917.5 447.5 917.5 450.5 922.5 456.5 913.5 458.5 917.5 459.5 915.5 460.5 917.5 473.5 917.5 474.5 919.5 475.5 917.5 489.5 917.5 491.5 913.5 493.5 917.5 499.5 917.5 501.5 913.5 503.5 917.5 517.5 917.5 519.5 922.5 521.5 917.5 532.5 917.5 534.5 920.5 536.5 917.5 548.5 917.5 550.5 913.5 552.5 917.5 553.5 915.5 554.5 917.5 556.5 915.5 558.5 917.5 562.5 917.5 563.5 919.5 565.5 915.5 566.5 917.5 568.5 914.5 570.5 917.5 570.5 917.5 579.5 917.5 578.5 917.5 578.5 964.8 579.5 967.5 579.5 1012.0 580.5 1014.7 580.5 1052.5 580.5 1052.5 585.5 1052.5 586.5 1049.5 587.5 1052.5 600.5 1052.5 602.5 1055.5 604.5 1052.5 612.5 1052.5 614.5 1049.5 616.5 1052.5 619.5 1052.5 621.5 1050.5 625.5 1055.5 626.5 1052.5 627.5 1054.5 628.5 1052.5 629.5 1055.5 630.5 1052.5 632.5 1052.5 634.5 1056.5 636.5 1052.5 644.5 1052.5 646.5 1056.5 648.5 1052.5 652.5 1052.5 653.5 1050.5 654.5 1052.5 662.5 1052.5 663.5 1049.5 664.5 1052.5 670.5 1052.5 672.5 1048.5 674.5 1052.5 686.5 1052.5 688.5 1049.5 690.5 1052.5 699.5 1052.5 701.5 1055.5 705.5 1049.5 706.5 1052.5 707.5 1050.5 708.5 1052.5 717.5 1052.5 718.5 1050.5 719.5 1052.5 733.5 1052.5 735.5 1056.5 737.5 1052.5 744.5 1052.5 746.5 1050.5 748.5 1052.5 750.5 1052.5 751.5 1050.5 752.5 1052.5 765.5 1052.5 768.5 1056.5 771.5 1052.5 781.5 1052.5 782.5 1050.5 783.5 1052.5 787.5 1052.5 789.5 1055.5 791.5 1052.5 793.5 1054.5 795.5 1052.5 798.5 1052.5 800.5 1049.5 802.5 1052.5 809.5 1052.5 810.5 1049.5 811.5 1052.5 812.5 1050.5 813.5 1052.5 823.5 1052.5 825.5 1049.5 827.5 1052.5 837.5 1052.5 839.5 1056.5 843.5 1050.5 844.5 1052.5 846.5 1049.5 848.5 1052.5 848.5 1052.5 852.5 1052.5 851.5 1052.5 851.5 1005.2 852.5 1002.5 852.5 958.0 853.5 955.3 853.5 917.5 853.5 917.5 867.5 917.5 869.5 922.5 871.5 917.5 875.5 917.5 876.5 915.5 877.5 917.5 879.5 917.5 881.5 913.5 883.5 917.5 889.5 917.5 891.5 922.5 893.5 917.5 907.5 917.5 909.5 921.5 911.5 917.5 921.5 917.5 923.5 921.5 925.5 917.5 930.5 917.5 932.5 921.5 934.5 917.5 939.5 917.5 941.5 920.5 943.5 917.5 957.5 917.5 958.5 914.5 959.5 917.5 967.5 917.5 968.5 919.5 969.5 917.5 975.5 917.5 977.5 914.5 981.5 922.5 983.5 917.5 984.5 919.5 985.5 917.5 993.5 917.5 995.5 913.5 997.5 917.5 1000.5 917.5 1001.5 915.5 1003.5 922.5 1005.5 917.5 1006.5 919.5 1008.5 914.5 1009.5 917.5 1010.5 915.5 1011.5 917.5 1020.5 917.5 1021.5 919.5 1023.5 913.5 1025.5 917.5 1026.5 915.5 1027.5 917.5 1034.5 917.5 1036.5 914.5 1038.5 917.5 1052.5 917.5 1054.5 922.5 1056.5 917.5 1058.5 920.5 1060.5 917.5 1074.5 917.5 1076.5 913.5 1078.5 917.5 1083.5 917.5 1084.5 914.5 1085.5 917.5 1093.5 917.5 1095.5 922.5 1097.5 917.5 1099.5 917.5 1101.5 921.5 1103.5 917.5 1103.5 917.5 1124.5 917.5 1123.5 917.5 1123.5 964.8 1124.5 967.5 1124.5 1012.0 1125.5 1014.7 1125.5 1052.5 1125.5 1052.5 1136.5 1052.5 1138.5 1048.5 1140.5 1052.5 1145.5 1052.5 1147.5 1048.5 1149.5 1052.5 1161.5 1052.5 1162.5 1055.5 1163.5 1052.5 1175.5 1052.5 1177.5 1049.5 1181.5 1056.5 1183.5 1052.5 1185.5 1056.5 1187.5 1052.5 1188.5 1054.5 1189.5 1052.5 1201.5 1052.5 1202.5 1049.5 1203.5 1052.5 1206.5 1052.5 1208.5 1055.5 1210.5 1052.5 1224.5 1052.5 1226.5 1055.5 1228.5 1052.5 1229.5 1049.5 1231.5 1054.5 1232.5 1052.5 1234.5 1055.5 1236.5 1052.5 1244.5 1052.5 1246.5 1055.5 1250.5 1048.5 1252.5 1052.5 1255.5 1048.5 1258.5 1052.5 1271.5 1052.5 1273.5 1048.5 1275.5 1052.5 1277.5 1052.5 1278.5 1055.5 1279.5 1052.5 1281.5 1048.5 1283.5 1052.5 1286.5 1052.5 1287.5 1050.5 1288.5 1052.5 1296.5 1052.5 1297.5 1049.5 1299.5 1054.5 1300.5 1052.5 1302.5 1056.5 1306.5 1049.5 1307.5 1052.5 1309.5 1048.5 1311.5 1052.5 1319.5 1052.5 1320.5 1055.5 1322.5 1050.5 1323.5 1052.5 1325.5 1048.5 1327.5 1052.5 1329.5 1052.5 1331.5 1048.5 1335.5 1055.5 1336.5 1052.5 1337.5 1055.5 1338.5 1052.5 1340.5 1054.5 1342.5 1052.5 1351.5 1052.5 1352.5 1050.5 1353.5 1052.5 1355.5 1055.5 1357.5 1052.5 1358.5 1049.5 1360.5 1054.5 1361.5 1052.5 1363.5 1056.5 1365.5 1052.5 1377.5 1052.5 1378.5 1050.5 1379.5 1052.5 1383.5 1052.5 1384.5 1050.5 1385.5 1052.5 1387.5 1056.5 1389.5 1052.5 1389.5 1052.5 1398.5 1052.5 1397.5 1052.5 1397.5 1005.2 1398.5 1002.5 1398.5 958.0 1399.5 955.3 1399.5 917.5 1399.5 917.5 1409.5 917.5 1410.5 919.5 1411.5 917.5 1412.5 915.5 1413.5 917.5 1424.5 917.5 1426.5 921.5 1428.5 917.5 1441.5 917.5 1442.5 919.5 1443.5 917.5 1451.5 917.5 1453.5 920.5 1455.5 917.5 1457.5 917.5 1458.5 914.5 1459.5 917.5 1461.5 921.5 1463.5 917.5 1464.5 914.5 1465.5 917.5 1473.5 917.5 1474.5 919.5 1475.5 917.5 1478.5 917.5 1480.5 921.5 1484.5 913.5 1486.5 917.5 1488.5 913.5 1490.5 917.5 1492.5 917.5 1494.5 914.5 1496.5 917.5 1503.5 917.5 1504.5 914.5 1506.5 922.5 1508.5 917.5 1509.5 919.5 1510.5 917.5 1518.5 917.5 1520.5 920.5 1522.5 917.5 1531.5 917.5 1532.5 914.5 1533.5 917.5 1537.5 917.5 1538.5 915.5 1539.5 917.5 1544.5 917.5 1545.5 920.5 1546.5 917.5 1553.5 917.5 1554.5 919.5 1555.5 917.5 1556.5 914.5 1557.5 917.5 1559.5 917.5 1561.5 915.5 1563.5 917.5 1564.5 915.5 1565.5 917.5 1567.5 917.5 1568.5 915.5 1569.5 917.5 1583.5 917.5 1585.5 913.5 1587.5 917.5 1588.5 919.5 1589.5 917.5 1601.5 917.5 1602.5 914.5 1603.5 917.5 1612.5 917.5 1615.5 921.5 1621.5 913.5 1623.5 917.5 1624.5 915.5 1625.5 917.5 1638.5 917.5 1641.5 922.5 1644.5 917.5 1657.5 917.5 1659.5 913.5 1661.5 917.5 1661.5 917.5 1671.5 917.5 1670.5 917.5 1670.5 964.8 1671.5 967.5 1671.5 1012.0 1672.5 1014.7 1672.5 1052.5 1672.5 1052.5 1678.5 1052.5 1680.5 1055.5 1682.5 1052.5 1684.5 1048.5 1686.5 1052.5 1690.5 1052.5 1692.5 1048.5 1696.5 1055.5 1697.5 1052.5 1699.5 1056.5 1703.5 1048.5 1705.5 1052.5 1707.5 1048.5 1709.5 1052.5 1711.5 1055.5 1713.5 1052.5 1715.5 1052.5 1717.5 1049.5 1719.5 1052.5 1731.5 1052.5 1733.5 1056.5 1735.5 1052.5 1737.5 1052.5 1739.5 1056.5 1741.5 1052.5 1746.5 1052.5 1748.5 1056.5 1750.5 1052.5 1755.5 1052.5 1756.5 1054.5 1757.5 1052.5 1766.5 1052.5 1767.5 1050.5 1768.5 1052.5 1769.5 1054.5 1770.5 1052.5 1775.5 1052.5 1777.5 1048.5 1779.5 1052.5 1789.5 1052.5 1790.5 1054.5 1791.5 1052.5 1792.5 1054.5 1793.5 1052.5 1804.5 1052.5 1806.5 1049.5 1810.5 1054.5 1811.5 1052.5 1813.5 1056.5 1815.5 1052.5 1819.5 1052.5 1820.5 1050.5 1821.5 1052.5 1834.5 1052.5 1836.5 1056.5 1838.5 1052.5 1848.5 1052.5 1849.5 1054.5 1850.5 1052.5 1852.5 1052.5 1854.5 1056.5 1856.5 1052.5 1861.5 1052.5 1863.5 1048.5 1865.5 1052.5 1867.5 1048.5 1869.5 1052.5 1881.5 1052.5 1883.5 1055.5 1885.5 1052.5 1890.5 1052.5 1891.5 1054.5 1892.5 1052.5 1898.5 1052.5 1900.5 1055.5 1902.5 1052.5 1914.5 1052.5 1916.5 1049.5 1918.5 1052.5 1919.5 1050.5 1920.5 1052.5 1927.5 1052.5 1928.5 1049.5 1929.5 1052.5 1931.5 1056.5 1933.5 1052.5 1934.5 1050.5 1935.5 1052.5 1935.5 1052.5 1944.5 1052.5 1943.5 1052.5 1943.5 1005.2 1944.5 1002.5 1944.5 958.0 1945.5 955.3 1945.5 917.5 1945.5 917.5 1948.5 917.5 1951.5 922.5 1954.5 917.5 1968.5 917.5 1969.5 915.5 1970.5 917.5 1975.5 917.5 1977.5 913.5 1979.5 917.5 1989.5 917.5 1990.5 914.5 1991.5 917.5 2002.5 917.5 2004.5 913.5 2008.5 920.5 2009.5 917.5 2011.5 921.5 2013.5 917.5 2019.5 917.5 2022.5 922.5 2025.5 917.5 2033.5 917.5 2034.5 919.5 2035.5 917.5 2038.5 917.5 2040.5 913.5 2042.5 917.5 2048.5 917.5 2049.5 919.5 2051.5 915.5 2052.5 917.5 2054.5 913.5 2056.5 917.5 2059.5 917.5 2061.5 914.5 2063.5 917.5 2064.5 919.5 2065.5 917.5 2075.5 917.5 2076.5 914.5 2077.5 917.5 2088.5 917.5 2089.5 915.5 2090.5 917.5 2100.5 917.5 2101.5 914.5 2103.5 919.5 2104.5 917.5 2106.5 920.5 2110.5 914.5 2111.5 917.5 2113.5 913.5 2115.5 917.5 2119.5 917.5 2120.5 920.5 2122.5 915.5 2123.5 917.5 2125.5 913.5 2127.5 917.5 2128.5 915.5 2129.5 917.5 2134.5 917.5 2137.5 922.5 2140.5 917.5 2149.5 917.5 2150.5 919.5 2151.5 917.5 2164.5 917.5 2166.5 922.5 2168.5 917.5 2170.5 921.5 2172.5 917.5 2184.5 917.5 2186.5 913.5 2188.5 917.5 2188.5 917.5 2213.5 917.5" stroke="#8e8e8e"/>
<path d="M38.5 1052.5 44.5 1052.5 46.5 1056.5 48.5 1052.5 49.5 1050.5 51.5 1056.5 53.5 1052.5 54.5 1054.5 56.5 1049.5 57.5 1052.5 58.5 1050.5 59.5 1052.5 67.5 1052.5 68.5 1050.5 69.5 1052.5 84.5 1052.5 85.5 1054.5 87.5 1049.5 88.5 1052.5 89.5 1050.5 90.5 1052.5 104.5 1052.5 105.5 1054.5 106.5 1052.5 116.5 1052.5 118.5 1049.5 120.5 1052.5 129.5 1052.5 131.5 1056.5 133.5 1052.5 143.5 1052.5 145.5 1056.5 147.5 1052.5 148.5 1050.5 149.5 1052.5 160.5 1052.5 162.5 1056.5 166.5 1049.5 167.5 1052.5 169.5 1048.5 171.5 1052.5 182.5 1052.5 184.5 1048.5 186.5 1052.5 204.5 1052.5 206.5 1055.5 208.5 1052.5 210.5 1055.5 214.5 1050.5 215.5 1052.5 217.5 1048.5 221.5 1056.5 223.5 1052.5 225.5 1055.5 227.5 1052.5 235.5 1052.5 237.5 1056.5 239.5 1052.5 245.5 1052.5 247.5 1048.5 249.5 1052.5 257.5 1052.5 260.5 1056.5 263.5 1052.5 269.5 1052.5 270.5 1055.5 271.5 1052.5 276.5 1052.5 278.5 1048.5 280.5 1052.5 282.5 1056.5 284.5 1052.5 293.5 1052.5 295.5 1056.5 297.5 1052.5 297.5 1052.5 307.5 1052.5 306.5 1052.5 306.5 1005.2 307.5 1002.5 307.5 958.0 308.5 955.3 308.5 917.5 308.5 917.5 325.5 917.5 326.5 915.5 327.5 917.5 337.5 917.5 339.5 913.5 341.5 917.5 354.5 917.5 355.5 915.5 357.5 922.5 359.5 917.5 361.5 920.5 365.5 915.5 366.5 917.5 367.5 915.5 368.5 917.5 385.5 917.5 388.5 913.5 391.5 917.5 404.5 917.5 405.5 915.5 406.5 917.5 417.5 917.5 418.5 919.5 419.5 917.5 423.5 917.5 425.5 919.5 427.5 917.5 435.5 917.5 437.5 914.5 439.5 917.5 454.5 917.5 456.5 914.5 460.5 922.5 462.5 917.5 463.5 920.5 464.5 917.5 468.5 917.5 470.5 913.5 472.5 917.5 476.5 917.5 477.5 915.5 478.5 917.5 493.5 917.5 495.5 913.5 497.5 917.5 499.5 913.5 501.5 917.5 514.5 917.5 516.5 921.5 520.5 915.5 521.5 917.5 522.5 915.5 523.5 917.5 528.5 917.5 530.5 920.5 532.5 917.5 546.5 917.5 548.5 921.5 552.5 913.5 554.5 917.5 556.5 913.5 558.5 917.5 564.5 917.5 565.5 915.5 566.5 917.5 566.5 917.5 581.5 917.5 580.5 917.5 580.5 964.8 581.5 967.5 581.5 1012.0 582.5 1014.7 582.5 1052.5 582.5 1052.5 591.5 1052.5 593.5 1048.5 595.5 1052.5 599.5 1052.5 600.5 1050.5 601.5 1052.5 602.5 1050.5 603.5 1052.5 606.5 1052.5 607.5 1054.5 609.5 1048.5 611.5 1052.5 613.5 1048.5 615.5 1052.5 619.5 1052.5 620.5 1050.5 621.5 1052.5 637.5 1052.5 638.5 1054.5 639.5 1052.5 655.5 1052.5 657.5 1049.5 661.5 1054.5 662.5 1052.5 663.5 1055.5 664.5 1052.5 668.5 1052.5 669.5 1049.5 670.5 1052.5 680.5 1052.5 681.5 1055.5 683.5 1048.5 685.5 1052.5 687.5 1048.5 689.5 1052.5 690.5 1049.5 691.5 1052.5 697.5 1052.5 699.5 1049.5 701.5 1052.5 710.5 1052.5 712.5 1048.5 716.5 1056.5 718.5 1052.5 720.5 1056.5 722.5 1052.5 735.5 1052.5 736.5 1054.5 737.5 1052.5 753.5 1052.5 755.5 1056.5 757.5 1052.5 765.5 1052.5 767.5 1048.5 769.5 1052.5 782.5 1052.5 783.5 1050.5 784.5 1052.5 792.5 1052.5 794.5 1048.5 796.5 1052.5 806.5 1052.5 807.5 1050.5 808.5 1052.5 813.5 1052.5 815.5 1056.5 817.5 1052.5 827.5 1052.5 828.5 1054.5 829.5 1052.5 831.5 1056.5 833.5 1052.5 839.5 1052.5 841.5 1056.5 843.5 1052.5 843.5 1052.5 854.5 1052.5 853.5 1052.5 853.5 1005.2 854.5 1002.5 854.5 958.0 855.5 955.3 855.5 917.5 855.5 917.5 871.5 917.5 873.5 920.5 875.5 917.5 885.5 917.5 887.5 913.5 889.5 917.5 901.5 917.5 902.5 919.5 903.5 917.5 904.5 920.5 905.5 917.5 921.5 917.5 924.5 913.5 927.5 917.5 929.5 913.5 931.5 917.5 946.5 917.5 949.5 922.5 952.5 917.5 962.5 917.5 963.5 914.5 964.5 917.5 979.5 917.5 981.5 920.5 983.5 917.5 986.5 917.5 987.5 920.5 988.5 917.5 989.5 914.5 990.5 917.5 1006.5 917.5 1008.5 921.5 1010.5 917.5 1011.5 919.5 1013.5 915.5 1014.5 917.5 1015.5 915.5 1016.5 917.5 1017.5 919.5 1018.5 917.5 1032.5 917.5 1033.5 919.5 1034.5 917.5 1036.5 913.5 1038.5 917.5 1053.5 917.5 1054.5 919.5 1055.5 917.5 1067.5 917.5 1068.5 919.5 1069.5 917.5 1085.5 917.5 1087.5 913.5 1089.5 917.5 1095.5 917.5 1097.5 914.5 1099.5 917.5 1110.5 917.5 1113.5 922.5 1116.5 917.5 1116.5 917.5 1126.5 917.5 1125.5 917.5 1125.5 964.8 1126.5 967.5 1126.5 1012.0 1127.5 1014.7 1127.5 1052.5 1127.5 1052.5 1137.5 1052.5 1138.5 1049.5 1139.5 1052.5 1154.5 1052.5 1155.5 1049.5 1156.5 1052.5 1169.5 1052.5 1171.5 1056.5 1175.5 1050.5 1176.5 1052.5 1177.5 1050.5 1178.5 1052.5 1196.5 1052.5 1197.5 1050.5 1198.5 1052.5 1210.5 1052.5 1212.5 1048.5 1214.5 1052.5 1227.5 1052.5 1228.5 1049.5 1229.5 1052.5 1235.5 1052.5 1237.5 1056.5 1239.5 1052.5 1251.5 1052.5 1252.5 1055.5 1253.5 1052.5 1260.5 1052.5 1263.5 1056.5 1269.5 1049.5 1270.5 1052.5 1271.5 1050.5 1272.5 1052.5 1289.5 1052.5 1291.5 1055.5 1293.5 1052.5 1308.5 1052.5 1310.5 1056.5 1312.5 1052.5 1324.5 1052.5 1326.5 1048.5 1328.5 1052.5 1330.5 1049.5 1332.5 1052.5 1333.5 1049.5 1334.5 1052.5 1340.5 1052.5 1341.5 1050.5 1342.5 1052.5 1347.5 1052.5 1348.5 1055.5 1349.5 1052.5 1351.5 1056.5 1353.5 1052.5 1364.5 1052.5 1366.5 1056.5 1368.5 1052.5 1378.5 1052.5 1379.5 1054.5 1380.5 1052.5 1380.5 1052.5 1400.5 1052.5 1399.5 1052.5 1399.5 1005.2 1400.5 1002.5 1400.5 958.0 1401.5 955.3 1401.5 917.5 1401.5 917.5 1418.5 917.5 1420.5 921.5 1422.5 917.5 1423.5 915.5 1424.5 917.5 1427.5 917.5 1429.5 919.5 1433.5 914.5 1434.5 917.5 1436.5 913.5 1438.5 917.5 1455.5 917.5 1457.5 913.5 1459.5 917.5 1477.5 917.5 1479.5 913.5 1481.5 917.5 1499.5 917.5 1500.5 919.5 1501.5 917.5 1503.5 914.5 1505.5 917.5 1522.5 917.5 1524.5 914.5 1526.5 917.5 1530.5 917.5 1533.5 922.5 1536.5 917.5 1538.5 913.5 1540.5 917.5 1543.5 917.5 1544.5 915.5 1545.5 917.5 1563.5 917.5 1565.5 913.5 1567.5 917.5 1577.5 917.5 1579.5 915.5 1581.5 917.5 1586.5 917.5 1588.5 913.5 1590.5 917.5 1592.5 913.5 1594.5 917.5 1611.5 917.5 1613.5 913.5 1615.5 917.5 1624.5 917.5 1625.5 914.5 1626.5 917.5 1644.5 917.5 1647.5 922.5 1650.5 917.5 1657.5 917.5 1660.5 913.5 1663.5 917.5 1663.5 917.5 1673.5 917.5 1672.5 917.5 1672.5 964.8 1673.5 967.5 1673.5 1012.0 1674.5 1014.7 1674.5 1052.5 1674.5 1052.5 1680.5 1052.5 1682.5 1048.5 1684.5 1052.5 1689.5 1052.5 1691.5 1055.5 1693.5 1052.5 1706.5 1052.5 1708.5 1055.5 1710.5 1052.5 1728.5 1052.5 1729.5 1050.5 1730.5 1052.5 1740.5 1052.5 1741.5 1050.5 1742.5 1052.5 1750.5 1052.5 1751.5 1054.5 1752.5 1052.5 1768.5 1052.5 1769.5 1054.5 1770.5 1052.5 1772.5 1056.5 1774.5 1052.5 1784.5 1052.5 1786.5 1049.5 1788.5 1052.5 1800.5 1052.5 1802.5 1049.5 1804.5 1052.5 1820.5 1052.5 1821.5 1049.5 1822.5 1052.5 1832.5 1052.5 1834.5 1049.5 1836.5 1052.5 1851.5 1052.5 1854.5 1056.5 1860.5 1048.5 1862.5 1052.5 1864.5 1049.5 1866.5 1052.5 1876.5 1052.5 1878.5 1048.5 1880.5 1052.5 1887.5 1052.5 1889.5 1056.5 1891.5 1052.5 1905.5 1052.5 1906.5 1049.5 1907.5 1052.5 1921.5 1052.5 1922.5 1054.5 1923.5 1052.5 1923.5 1052.5 1946.5 1052.5 1945.5 1052.5 1945.5 1005.2 1946.5 1002.5 1946.5 958.0 1947.5 955.3 1947.5 917.5 1947.5 917.5 1960.5 917.5 1961.5 915.5 1962.5 917.5 1977.5 917.5 1979.5 921.5 1981.5 917.5 1987.5 917.5 1989.5 921.5 1991.5 917.5 1997.5 917.5 1999.5 913.5 2001.5 917.5 2011.5 917.5 2014.5 922.5 2017.5 917.5 2024.5 917.5 2025.5 915.5 2026.5 917.5 2029.5 922.5 2035.5 914.5 2036.5 917.5 2038.5 913.5 2040.5 917.5 2051.5 917.5 2052.5 915.5 2053.5 917.5 2056.5 913.5 2059.5 917.5 2070.5 917.5 2072.5 913.5 2076.5 919.5 2077.5 917.5 2078.5 919.5 2079.5 917.5 2081.5 913.5 2083.5 917.5 2092.5 917.5 2093.5 915.5 2094.5 917.5 2101.5 917.5 2102.5 920.5 2103.5 917.5 2117.5 917.5 2118.5 914.5 2119.5 917.5 2135.5 917.5 2138.5 922.5 2141.5 917.5 2158.5 917.5 2159.5 919.5 2160.5 917.5 2172.5 917.5 2174.5 919.5 2176.5 917.5 2182.5 917.5 2183.5 919.5 2184.5 917.5 2191.5 917.5 2193.5 921.5 2197.5 914.5 2198.5 917.5 2200.5 914.5 2202.5 917.5 2202.5 917.5 2213.5 917.5" stroke="#8e8e8e"/>
    </g>
  </svg>
  <div class="sl" style="left:17px;top:9px;color:#fff">USB0::0x0699::0x0408::C041762::INSTR</div>
  <div class="sl" style="left:450px;color:#22c33a">H:400.0us</div>
  <div class="sl" style="left:578px;color:#ffff00">C1:2.0v</div>
  <div class="sl" style="left:897px;color:#2ea9f2">C2:2.0v</div>
  <div class="sl" style="left:1204px;color:#f05ef0">C3:2.0v</div>
  <div class="sl" style="left:1534px;color:#1fbf4a">C4:2.0v</div>
  <div class="sl" style="left:2143px;top:8px;font-size:22px;line-height:28px;color:#ffff00">已触发</div>
</div>

<div id="panel"></div>
<div id="ptitle">测量值</div>
<div class="mrow" style="top:170.0px;height:40.0px"><div class="ml">CH1:最大值</div><div class="mv">2.640 V</div></div>
<div class="mrow" style="top:214.0px;height:40.0px"><div class="ml">CH1:最小值</div><div class="mv">-160.00 mV</div></div>
<div class="mrow" style="top:259.0px;height:40.0px"><div class="ml">CH1:平均值</div><div class="mv">1.243 V</div></div>
<div class="mrow" style="top:303.0px;height:40.0px"><div class="ml">CH1:幅值</div><div class="mv">2.480 V</div></div>
<div class="mrow" style="top:348.0px;height:40.0px"><div class="ml">CH1:频率</div><div class="mv">996.0 HZ</div></div>
<div class="mrow" style="top:392.0px;height:40.0px"><div class="ml">CH1:有效值</div><div class="mv">1.755 V</div></div>
<div class="mrow" style="top:436.0px;height:40.0px"><div class="ml">CH1:峰峰值</div><div class="mv">2.800 V</div></div>
<div class="mrow" style="top:481.0px;height:40.0px"><div class="ml">CH2:最大值</div><div class="mv">2.680 V</div></div>
<div class="mrow" style="top:525.0px;height:40.0px"><div class="ml">CH2:最小值</div><div class="mv">-40.00 mV</div></div>
<div class="mrow" style="top:570.0px;height:40.0px"><div class="ml">CH2:平均值</div><div class="mv">1.287 V</div></div>
<div class="mrow" style="top:614.0px;height:40.0px"><div class="ml">CH2:幅值</div><div class="mv">2.480 V</div></div>
<div class="mrow" style="top:658.0px;height:40.0px"><div class="ml">CH2:频率</div><div class="mv">995.9 HZ</div></div>
<div class="mrow" style="top:703.0px;height:40.0px"><div class="ml">CH2:有效值</div><div class="mv">1.773 V</div></div>
<div class="mrow" style="top:747.0px;height:40.0px"><div class="ml">CH2:峰峰值</div><div class="mv">2.720 V</div></div>
<div class="mrow" style="top:792.0px;height:40.0px"><div class="ml">CH3:最大值</div><div class="mv">2.640 V</div></div>
<div class="mrow" style="top:836.0px;height:40.0px"><div class="ml">CH3:最小值</div><div class="mv">-80.00 mV</div></div>
<div class="mrow" style="top:880.0px;height:40.0px"><div class="ml">CH3:平均值</div><div class="mv">1.243 V</div></div>
<div class="mrow" style="top:925.0px;height:40.0px"><div class="ml">CH3:幅值</div><div class="mv">2.480 V</div></div>
<div class="mrow" style="top:969.0px;height:40.0px"><div class="ml">CH3:频率</div><div class="mv">998.8 HZ</div></div>
<div class="mrow" style="top:1014.0px;height:40.0px"><div class="ml">CH3:有效值</div><div class="mv">1.752 V</div></div>
<div class="mrow" style="top:1058.0px;height:40.0px"><div class="ml">CH3:峰峰值</div><div class="mv">2.720 V</div></div>
<div class="mrow" style="top:1102.0px;height:40.0px"><div class="ml">CH4:最大值</div><div class="mv">2.640 V</div></div>
<div class="mrow" style="top:1147.0px;height:40.0px"><div class="ml">CH4:最小值</div><div class="mv">-80.00 mV</div></div>
<div class="mrow" style="top:1191.0px;height:40.0px"><div class="ml">CH4:平均值</div><div class="mv">1.263 V</div></div>
<div class="mrow" style="top:1236.0px;height:40.0px"><div class="ml">CH4:幅值</div><div class="mv">2.480 V</div></div>
<div class="mrow" style="top:1280.0px;height:40.0px"><div class="ml">CH4:频率</div><div class="mv">998.5 HZ</div></div>
<div id="sbar"></div>
<div id="sthumb"></div>
<svg class="abs" style="left:2518px;top:162px" width="15" height="16" viewBox="0 0 15 16"><path d="M4.3 11 L7.5 7 L10.7 11" fill="none" stroke="#505050" stroke-width="1.9"/></svg>
<svg class="abs" style="left:2518px;top:1305px" width="15" height="16" viewBox="0 0 15 16"><path d="M4.3 6 L7.5 10 L10.7 6" fill="none" stroke="#505050" stroke-width="1.9"/></svg>

<div id="bottom"></div>
<svg class="abs" style="left:206px;top:1310px" width="48" height="48" viewBox="0 0 48 48">
  <circle cx="24" cy="24" r="23.7" fill="#e84648"/>
  <rect x="15" y="12" width="7" height="26" rx="1" fill="#fff"/>
  <rect x="27" y="12" width="7" height="26" rx="1" fill="#fff"/>
</svg>
<div class="tool" style="left:259px;top:1324px;color:#e84648;font-weight:bold;font-size:17.5px;line-height:22px">停止</div>

<div class="tool" style="left:1496px;top:1326px;font-size:22px;line-height:28px;color:#111">波形名称</div>
<div class="abs" style="left:1604px;top:1319px;width:219px;height:40px;border:1.5px solid #a8a8a8;border-radius:4px;background:#fff"></div>
<div class="tool" style="left:1615px;top:1323px;font-size:23.5px;line-height:30px;color:#111">123</div>
<div class="abs" style="left:1840px;top:1328px;width:40px;height:25px;border-radius:12.5px;background:#e2e2e2"></div>
<div class="abs" style="left:1842px;top:1331px;width:19px;height:19px;border-radius:50%;background:#3fdc2c"></div>
<div class="tool" style="left:1886px;top:1328px;font-size:19px;line-height:26px;color:#222">打开余晖</div>

<div class="abs" style="left:2014px;top:1311px;width:112px;height:46px;border:1px solid #8fbcee;border-radius:4px;background:#fff;overflow:hidden">
  <div class="abs" style="left:0;top:0;width:19px;height:46px;background:#dde9f8"></div>
  <div class="abs" style="left:88px;top:0;width:24px;height:46px;background:#dde9f8"></div>
</div>
<svg class="abs" style="left:2018px;top:1325px" width="12" height="18" viewBox="0 0 12 18"><path d="M8.5 3 L3.5 8.5 L8.5 14" fill="none" stroke="#f7fafd" stroke-width="1.4"/></svg>
<svg class="abs" style="left:2106px;top:1325px" width="12" height="18" viewBox="0 0 12 18"><path d="M3.5 3 L8.5 8.5 L3.5 14" fill="none" stroke="#f7fafd" stroke-width="1.4"/></svg>
<div class="tool" style="left:2060px;top:1314px;font-size:19px;line-height:22px;color:#1a1aff">2</div>
<div class="tool" style="left:2049px;top:1337px;font-size:14.5px;line-height:17px;color:#111">共2 &nbsp;&nbsp;个</div>

<svg class="abs" style="left:2160px;top:1305px" width="54" height="60" viewBox="2160 1305 54 60">
  <path d="M2170 1312 H2197 L2206.6 1325.5 V1354.5 Q2206.6 1357.5 2203.6 1357.5 H2170 Q2167 1357.5 2167 1354.5 V1315 Q2167 1312 2170 1312 Z" fill="#dadee2"/>
  <path d="M2171 1317 H2196.4 V1330.5 Q2196.4 1332 2195 1332 H2172.5 Q2171 1332 2171 1330.5 Z" fill="#fff"/>
  <rect x="2191" y="1322" width="3.2" height="7" rx="1.5" fill="#dadee2"/>
  <rect x="2172.6" y="1338.2" width="28" height="4.5" rx="2.2" fill="#fff"/>
  <rect x="2172.6" y="1347.4" width="28" height="4.5" rx="2.2" fill="#fff"/>
</svg>

<div id="rborder"></div>
<div id="bborder"></div>
<div id="bborder2"></div>
</body></html>
